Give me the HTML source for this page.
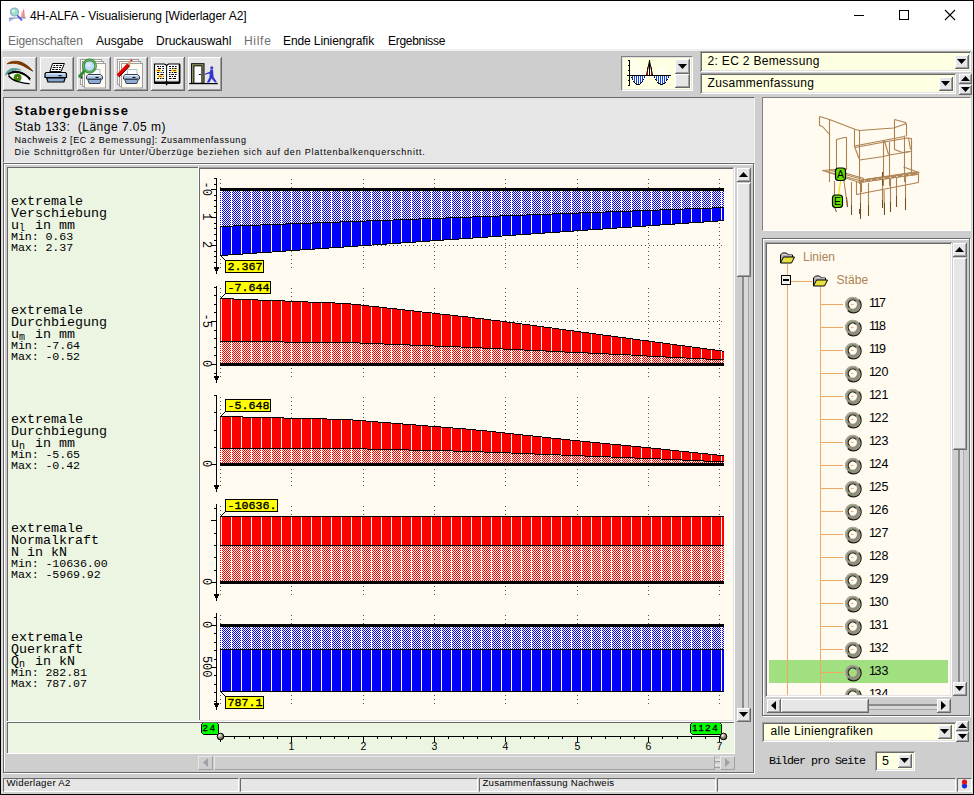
<!DOCTYPE html>
<html lang="de"><head><meta charset="utf-8"><title>4H-ALFA - Visualisierung [Widerlager A2]</title>
<style>
html,body{margin:0;padding:0;}
body{width:974px;height:795px;overflow:hidden;background:#fff;position:relative;font-family:"Liberation Sans",sans-serif;font-size:12px;color:#000;}
body div, body svg{position:absolute;box-sizing:content-box;}
.ui{font-family:"Liberation Sans",sans-serif;font-size:12px;line-height:16px;}
.mono{font-family:"Liberation Mono",monospace;}
svg text{font-family:"Liberation Mono",monospace;}
svg text.sans{font-family:"Liberation Sans",sans-serif;}
</style></head><body>
<div style="left:0px;top:0px;width:974px;height:795px;background:#000;"></div>
<div style="left:1px;top:1px;width:972px;height:793px;background:#fff;"></div>
<svg style="left:9px;top:6.5px" width="17" height="16" viewBox="0 0 17 16">
<polygon points="0,11 0,15 6,11" fill="#9ab4e8"/>
<polygon points="11,11 15,1 16,11" fill="#e88a8a"/>
<line x1="13" y1="4" x2="13" y2="11" stroke="#f4c0c0" stroke-width="1"/>
<line x1="0" y1="11" x2="17" y2="11" stroke="#7c8aa8" stroke-width="1"/>
<line x1="8" y1="8" x2="13" y2="13.5" stroke="#5050e0" stroke-width="1.8"/>
<circle cx="5.5" cy="5" r="4" fill="#9fe0c0" stroke="#88a8d8" stroke-width="1.2"/>
<circle cx="4.5" cy="4" r="1.6" fill="#d8f8e8"/>
</svg>
<div class="ui" style="left:30px;top:8px;white-space:pre;letter-spacing:-0.05px;">4H-ALFA - Visualisierung [Widerlager A2]</div>
<svg style="left:840px;top:1px" width="132" height="30" viewBox="840 1 132 30" shape-rendering="crispEdges"><rect x="854" y="15" width="10" height="1" fill="#000"/><rect x="899.5" y="10.5" width="9" height="9" fill="none" stroke="#000" stroke-width="1"/><g shape-rendering="auto" stroke="#000" stroke-width="1.1"><line x1="945" y1="10" x2="955" y2="20"/><line x1="955" y1="10" x2="945" y2="20"/></g></svg>
<div class="ui" style="left:8px;top:33px;white-space:pre;color:#6d6d6d;letter-spacing:-0.1px;">Eigenschaften</div>
<div class="ui" style="left:96px;top:33px;white-space:pre;color:#000;letter-spacing:0px;">Ausgabe</div>
<div class="ui" style="left:156px;top:33px;white-space:pre;color:#000;letter-spacing:0px;">Druckauswahl</div>
<div class="ui" style="left:244px;top:33px;white-space:pre;color:#6d6d6d;letter-spacing:0.7px;">Hilfe</div>
<div class="ui" style="left:283px;top:33px;white-space:pre;color:#000;letter-spacing:-0.1px;">Ende Liniengrafik</div>
<div class="ui" style="left:388px;top:33px;white-space:pre;color:#000;letter-spacing:-0.3px;">Ergebnisse</div>
<div style="left:1px;top:49px;width:972px;height:2px;background:#f0f0f0;"></div>
<div style="left:1px;top:51px;width:972px;height:743px;background:#cecece;"></div>
<div style="left:3px;top:57px;width:34px;height:34px;background:#e6e6e6;box-shadow:inset -1px -1px 0 #696969, inset 1px 1px 0 #fff, inset -2px -2px 0 #a0a0a0;"></div>
<div style="left:40px;top:57px;width:34px;height:34px;background:#e6e6e6;box-shadow:inset -1px -1px 0 #696969, inset 1px 1px 0 #fff, inset -2px -2px 0 #a0a0a0;"></div>
<div style="left:77px;top:57px;width:34px;height:34px;background:#e6e6e6;box-shadow:inset -1px -1px 0 #696969, inset 1px 1px 0 #fff, inset -2px -2px 0 #a0a0a0;"></div>
<div style="left:114px;top:57px;width:34px;height:34px;background:#e6e6e6;box-shadow:inset -1px -1px 0 #696969, inset 1px 1px 0 #fff, inset -2px -2px 0 #a0a0a0;"></div>
<div style="left:151px;top:57px;width:34px;height:34px;background:#e6e6e6;box-shadow:inset -1px -1px 0 #696969, inset 1px 1px 0 #fff, inset -2px -2px 0 #a0a0a0;"></div>
<div style="left:188px;top:57px;width:34px;height:34px;background:#e6e6e6;box-shadow:inset -1px -1px 0 #696969, inset 1px 1px 0 #fff, inset -2px -2px 0 #a0a0a0;"></div>
<div style="left:621px;top:56px;width:70px;height:33px;background:#ffffe1;border-style:solid;border-width:1px;border-color:#808080 #ffffff #ffffff #808080;"></div>
<div style="left:622px;top:57px;width:68px;height:31px;border:1px solid #e4e4e4;"></div>
<div style="left:675px;top:59px;width:15px;height:15px;background:#e6e6e6;box-shadow:inset -1px -1px 0 #696969, inset 1px 1px 0 #fff, inset -2px -2px 0 #a0a0a0;"></div>
<svg style="left:678.0px;top:64.0px" width="9" height="5" viewBox="0 0 9 5"><polygon points="0,0 9,0 4.5,5" fill="#000"/></svg>
<div style="left:675px;top:74px;width:15px;height:14px;background:#e6e6e6;box-shadow:inset -1px -1px 0 #696969, inset 1px 1px 0 #fff, inset -2px -2px 0 #a0a0a0;"></div>
<svg style="left:624px;top:59px" width="50" height="30" viewBox="0 0 50 30" shape-rendering="crispEdges"><rect x="8" y="1" width="1" height="15" fill="#fff"/><rect x="10" y="3" width="1" height="13" fill="#fff"/><rect x="12" y="5" width="1" height="11" fill="#fff"/><rect x="14" y="7" width="1" height="9" fill="#fff"/><rect x="16" y="9" width="1" height="7" fill="#fff"/><rect x="18" y="11" width="1" height="5" fill="#fff"/><rect x="20" y="13" width="1" height="3" fill="#fff"/><rect x="30" y="14" width="1" height="2" fill="#fff"/><rect x="32" y="12" width="1" height="4" fill="#fff"/><rect x="34" y="10" width="1" height="6" fill="#fff"/><rect x="36" y="8" width="1" height="8" fill="#fff"/><rect x="38" y="8" width="1" height="8" fill="#fff"/><rect x="40" y="10" width="1" height="6" fill="#fff"/><rect x="42" y="12" width="1" height="4" fill="#fff"/><rect x="44" y="14" width="1" height="2" fill="#fff"/><rect x="6" y="16" width="1" height="1" fill="#000"/><rect x="7" y="18" width="1" height="1" fill="#000"/><rect x="8" y="17" width="1" height="4" fill="#1040ff"/><rect x="8" y="20" width="1" height="1" fill="#000"/><rect x="9" y="22" width="1" height="1" fill="#000"/><rect x="10" y="17" width="1" height="7" fill="#1040ff"/><rect x="10" y="23" width="1" height="1" fill="#000"/><rect x="11" y="24" width="1" height="1" fill="#000"/><rect x="12" y="17" width="1" height="9" fill="#1040ff"/><rect x="12" y="25" width="1" height="1" fill="#000"/><rect x="13" y="25" width="1" height="1" fill="#000"/><rect x="14" y="17" width="1" height="9" fill="#1040ff"/><rect x="14" y="25" width="1" height="1" fill="#000"/><rect x="15" y="25" width="1" height="1" fill="#000"/><rect x="16" y="17" width="1" height="8" fill="#1040ff"/><rect x="16" y="24" width="1" height="1" fill="#000"/><rect x="17" y="23" width="1" height="1" fill="#000"/><rect x="18" y="17" width="1" height="6" fill="#1040ff"/><rect x="18" y="22" width="1" height="1" fill="#000"/><rect x="19" y="20" width="1" height="1" fill="#000"/><rect x="20" y="17" width="1" height="2" fill="#1040ff"/><rect x="20" y="18" width="1" height="1" fill="#000"/><rect x="21" y="16" width="1" height="1" fill="#000"/><rect x="29" y="16" width="1" height="1" fill="#000"/><rect x="30" y="17" width="1" height="2" fill="#1040ff"/><rect x="30" y="18" width="1" height="1" fill="#000"/><rect x="31" y="20" width="1" height="1" fill="#000"/><rect x="32" y="17" width="1" height="5" fill="#1040ff"/><rect x="32" y="21" width="1" height="1" fill="#000"/><rect x="33" y="23" width="1" height="1" fill="#000"/><rect x="34" y="17" width="1" height="8" fill="#1040ff"/><rect x="34" y="24" width="1" height="1" fill="#000"/><rect x="35" y="24" width="1" height="1" fill="#000"/><rect x="36" y="17" width="1" height="9" fill="#1040ff"/><rect x="36" y="25" width="1" height="1" fill="#000"/><rect x="37" y="25" width="1" height="1" fill="#000"/><rect x="38" y="17" width="1" height="9" fill="#1040ff"/><rect x="38" y="25" width="1" height="1" fill="#000"/><rect x="39" y="24" width="1" height="1" fill="#000"/><rect x="40" y="17" width="1" height="8" fill="#1040ff"/><rect x="40" y="24" width="1" height="1" fill="#000"/><rect x="41" y="23" width="1" height="1" fill="#000"/><rect x="42" y="17" width="1" height="5" fill="#1040ff"/><rect x="42" y="21" width="1" height="1" fill="#000"/><rect x="43" y="20" width="1" height="1" fill="#000"/><rect x="44" y="17" width="1" height="2" fill="#1040ff"/><rect x="44" y="18" width="1" height="1" fill="#000"/><rect x="45" y="16" width="1" height="1" fill="#000"/><rect x="22" y="13" width="1" height="3" fill="#ffffe1"/><rect x="23" y="8" width="1" height="8" fill="#ff0000"/><rect x="24" y="3" width="1" height="13" fill="#ffffe1"/><rect x="25" y="1" width="1" height="15" fill="#ff0000"/><rect x="26" y="3" width="1" height="13" fill="#ffffe1"/><rect x="27" y="8" width="1" height="8" fill="#ff0000"/><rect x="28" y="13" width="1" height="3" fill="#ffffe1"/><rect x="25" y="1" width="1" height="15" fill="#000"/><polyline points="22.5,16 25.5,2 28.5,16" fill="none" stroke="#000" stroke-width="1" shape-rendering="auto"/><rect x="3" y="16" width="44" height="1" fill="#000"/><rect x="5" y="1" width="1" height="26" fill="#000"/><rect x="4" y="1" width="1" height="1" fill="#000"/><rect x="4" y="6" width="1" height="1" fill="#000"/><rect x="4" y="11" width="1" height="1" fill="#000"/><rect x="4" y="21" width="1" height="1" fill="#000"/><rect x="4" y="26" width="1" height="1" fill="#000"/></svg>
<div style="left:700px;top:51px;width:271px;height:21px;background:#ffffe1;box-shadow:inset 1px 1px 0 #a0a0a0, inset -1px -1px 0 #fff, inset 2px 2px 0 #696969, inset -2px -2px 0 #e3e3e3;"></div>
<div style="left:955px;top:55px;width:14px;height:14px;background:#e6e6e6;box-shadow:inset -1px -1px 0 #696969, inset 1px 1px 0 #fff, inset -2px -2px 0 #a0a0a0;"></div>
<svg style="left:957.0px;top:59.0px" width="9" height="5" viewBox="0 0 9 5"><polygon points="0,0 9,0 4.5,5" fill="#000"/></svg>
<div style="left:707.5px;top:53px;white-space:pre;font-size:12px;letter-spacing:0.32px;line-height:16px;">2: EC 2 Bemessung</div>
<div style="left:700px;top:73px;width:256px;height:21px;background:#ffffe1;box-shadow:inset 1px 1px 0 #a0a0a0, inset -1px -1px 0 #fff, inset 2px 2px 0 #696969, inset -2px -2px 0 #e3e3e3;"></div>
<div style="left:939px;top:77px;width:14px;height:14px;background:#e6e6e6;box-shadow:inset -1px -1px 0 #696969, inset 1px 1px 0 #fff, inset -2px -2px 0 #a0a0a0;"></div>
<svg style="left:941.0px;top:81.0px" width="9" height="5" viewBox="0 0 9 5"><polygon points="0,0 9,0 4.5,5" fill="#000"/></svg>
<div style="left:707.5px;top:74.5px;white-space:pre;font-size:12px;letter-spacing:0.32px;line-height:16px;">Zusammenfassung</div>
<div style="left:959px;top:74px;width:13px;height:10px;background:#e6e6e6;box-shadow:inset -1px -1px 0 #696969, inset 1px 1px 0 #fff, inset -2px -2px 0 #a0a0a0;"></div>
<svg style="left:961.0px;top:76.0px" width="9" height="5" viewBox="0 0 9 5"><polygon points="0,5 4.5,0 9,5" fill="#000"/></svg>
<div style="left:959px;top:85px;width:13px;height:10px;background:#e6e6e6;box-shadow:inset -1px -1px 0 #696969, inset 1px 1px 0 #fff, inset -2px -2px 0 #a0a0a0;"></div>
<svg style="left:961.0px;top:87.0px" width="9" height="5" viewBox="0 0 9 5"><polygon points="0,0 9,0 4.5,5" fill="#000"/></svg>
<div style="left:3px;top:97px;width:750px;height:64px;background:#e6e6e6;border-style:solid;border-width:1px;border-color:#696969 #f4f4f4 #f4f4f4 #696969;"></div>
<div style="left:14.5px;top:103px;white-space:pre;font-weight:bold;font-size:13px;letter-spacing:1.28px;line-height:16px;">Stabergebnisse</div>
<div style="left:14.5px;top:119px;white-space:pre;font-size:12px;letter-spacing:0.48px;line-height:16px;">Stab 133:  (Länge 7.05 m)</div>
<div style="left:14.5px;top:135px;white-space:pre;font-size:9px;letter-spacing:0.6px;line-height:11px;">Nachweis 2 [EC 2 Bemessung]: Zusammenfassung</div>
<div style="left:14.5px;top:146.6px;white-space:pre;font-size:9px;letter-spacing:0.79px;line-height:11px;">Die Schnittgrößen für Unter/Überzüge beziehen sich auf den Plattenbalkenquerschnitt.</div>
<div style="left:1px;top:51px;width:2px;height:743px;background:#dcdcdc;"></div>
<div style="left:972px;top:51px;width:1px;height:743px;background:#e0e0e0;"></div>
<div style="left:4px;top:164px;width:749px;height:608px;border:1px solid #fff;"></div>
<div style="left:3px;top:163px;width:749px;height:608px;background:#cecece;border:1px solid #696969;"></div>
<div style="left:4px;top:164px;width:1px;height:608px;background:#fff;"></div>
<div style="left:4px;top:164px;width:749px;height:1px;background:#fff;"></div>
<div style="left:7px;top:167px;width:192px;height:555px;background:#fff;"></div>
<div style="left:7px;top:167px;width:191px;height:554px;background:#696969;"></div>
<div style="left:8px;top:168px;width:190px;height:553px;background:#ecf5e2;"></div>
<div style="left:199px;top:167px;width:536px;height:555px;background:#fff;"></div>
<div style="left:199px;top:167px;width:535px;height:554px;background:#e3e3e3;"></div>
<div style="left:199px;top:167px;width:534px;height:553px;background:#696969;"></div>
<div style="left:199px;top:167px;width:535px;height:1px;background:#a0a0a0;"></div>
<div style="left:200px;top:169px;width:533px;height:551px;background:#fffbf0;"></div>
<div style="left:7px;top:722px;width:728px;height:32px;background:#fff;"></div>
<div style="left:7px;top:722px;width:727px;height:31px;background:#696969;"></div>
<div style="left:8px;top:723px;width:726px;height:30px;background:#ecf5e2;"></div>
<svg style="left:200px;top:169px" width="533" height="551" viewBox="200 169 533 551" shape-rendering="crispEdges"><defs><pattern id="pb" width="2" height="2" patternUnits="userSpaceOnUse"><rect width="2" height="2" fill="#fffbf0"/><rect x="0" y="0" width="1" height="1" fill="#0000ff"/><rect x="1" y="1" width="1" height="1" fill="#0000ff"/></pattern><pattern id="pr" width="2" height="2" patternUnits="userSpaceOnUse"><rect width="2" height="2" fill="#fffbf0"/><rect x="0" y="0" width="1" height="1" fill="#ff0000"/><rect x="1" y="1" width="1" height="1" fill="#ff0000"/></pattern></defs><line x1="220.5" y1="179" x2="220.5" y2="269" stroke="#505050" stroke-width="1" stroke-dasharray="1 3"/><line x1="291.5" y1="179" x2="291.5" y2="269" stroke="#505050" stroke-width="1" stroke-dasharray="1 3"/><line x1="363.5" y1="179" x2="363.5" y2="269" stroke="#505050" stroke-width="1" stroke-dasharray="1 3"/><line x1="434.5" y1="179" x2="434.5" y2="269" stroke="#505050" stroke-width="1" stroke-dasharray="1 3"/><line x1="505.5" y1="179" x2="505.5" y2="269" stroke="#505050" stroke-width="1" stroke-dasharray="1 3"/><line x1="577.5" y1="179" x2="577.5" y2="269" stroke="#505050" stroke-width="1" stroke-dasharray="1 3"/><line x1="648.5" y1="179" x2="648.5" y2="269" stroke="#505050" stroke-width="1" stroke-dasharray="1 3"/><line x1="719.5" y1="179" x2="719.5" y2="269" stroke="#505050" stroke-width="1" stroke-dasharray="1 3"/><line x1="221" y1="217.5" x2="724" y2="217.5" stroke="#505050" stroke-width="1" stroke-dasharray="1 3"/><line x1="221" y1="245.5" x2="724" y2="245.5" stroke="#505050" stroke-width="1" stroke-dasharray="1 3"/><rect x="220" y="189" width="8" height="37" fill="url(#pb)"/><rect x="220" y="226" width="8" height="29" fill="#0000ff"/><rect x="228" y="189" width="5" height="37" fill="url(#pb)"/><rect x="228" y="226" width="5" height="28" fill="#0000ff"/><rect x="233" y="189" width="10" height="36" fill="url(#pb)"/><rect x="233" y="225" width="10" height="29" fill="#0000ff"/><rect x="243" y="189" width="14" height="36" fill="url(#pb)"/><rect x="243" y="225" width="14" height="28" fill="#0000ff"/><rect x="257" y="189" width="3" height="36" fill="url(#pb)"/><rect x="257" y="225" width="3" height="27" fill="#0000ff"/><rect x="260" y="189" width="12" height="35" fill="url(#pb)"/><rect x="260" y="224" width="12" height="28" fill="#0000ff"/><rect x="272" y="189" width="14" height="35" fill="url(#pb)"/><rect x="272" y="224" width="14" height="27" fill="#0000ff"/><rect x="286" y="189" width="14" height="34" fill="url(#pb)"/><rect x="286" y="223" width="14" height="27" fill="#0000ff"/><rect x="300" y="189" width="13" height="34" fill="url(#pb)"/><rect x="300" y="223" width="13" height="26" fill="#0000ff"/><rect x="313" y="189" width="2" height="33" fill="url(#pb)"/><rect x="313" y="222" width="2" height="27" fill="#0000ff"/><rect x="315" y="189" width="14" height="33" fill="url(#pb)"/><rect x="315" y="222" width="14" height="26" fill="#0000ff"/><rect x="329" y="189" width="11" height="33" fill="url(#pb)"/><rect x="329" y="222" width="11" height="25" fill="#0000ff"/><rect x="340" y="189" width="4" height="32" fill="url(#pb)"/><rect x="340" y="221" width="4" height="26" fill="#0000ff"/><rect x="344" y="189" width="14" height="32" fill="url(#pb)"/><rect x="344" y="221" width="14" height="25" fill="#0000ff"/><rect x="358" y="189" width="8" height="32" fill="url(#pb)"/><rect x="358" y="221" width="8" height="24" fill="#0000ff"/><rect x="366" y="189" width="6" height="31" fill="url(#pb)"/><rect x="366" y="220" width="6" height="25" fill="#0000ff"/><rect x="372" y="189" width="15" height="31" fill="url(#pb)"/><rect x="372" y="220" width="15" height="24" fill="#0000ff"/><rect x="387" y="189" width="6" height="31" fill="url(#pb)"/><rect x="387" y="220" width="6" height="23" fill="#0000ff"/><rect x="393" y="189" width="8" height="30" fill="url(#pb)"/><rect x="393" y="219" width="8" height="24" fill="#0000ff"/><rect x="401" y="189" width="15" height="30" fill="url(#pb)"/><rect x="401" y="219" width="15" height="23" fill="#0000ff"/><rect x="416" y="189" width="3" height="30" fill="url(#pb)"/><rect x="416" y="219" width="3" height="22" fill="#0000ff"/><rect x="419" y="189" width="11" height="29" fill="url(#pb)"/><rect x="419" y="218" width="11" height="23" fill="#0000ff"/><rect x="430" y="189" width="14" height="29" fill="url(#pb)"/><rect x="430" y="218" width="14" height="22" fill="#0000ff"/><rect x="444" y="189" width="2" height="29" fill="url(#pb)"/><rect x="444" y="218" width="2" height="21" fill="#0000ff"/><rect x="446" y="189" width="13" height="28" fill="url(#pb)"/><rect x="446" y="217" width="13" height="22" fill="#0000ff"/><rect x="459" y="189" width="13" height="28" fill="url(#pb)"/><rect x="459" y="217" width="13" height="21" fill="#0000ff"/><rect x="472" y="189" width="1" height="27" fill="url(#pb)"/><rect x="472" y="216" width="1" height="22" fill="#0000ff"/><rect x="473" y="189" width="15" height="27" fill="url(#pb)"/><rect x="473" y="216" width="15" height="21" fill="#0000ff"/><rect x="488" y="189" width="11" height="27" fill="url(#pb)"/><rect x="488" y="216" width="11" height="20" fill="#0000ff"/><rect x="499" y="189" width="3" height="26" fill="url(#pb)"/><rect x="499" y="215" width="3" height="21" fill="#0000ff"/><rect x="502" y="189" width="14" height="26" fill="url(#pb)"/><rect x="502" y="215" width="14" height="20" fill="#0000ff"/><rect x="516" y="189" width="10" height="26" fill="url(#pb)"/><rect x="516" y="215" width="10" height="19" fill="#0000ff"/><rect x="526" y="189" width="5" height="25" fill="url(#pb)"/><rect x="526" y="214" width="5" height="20" fill="#0000ff"/><rect x="531" y="189" width="14" height="25" fill="url(#pb)"/><rect x="531" y="214" width="14" height="19" fill="#0000ff"/><rect x="545" y="189" width="7" height="25" fill="url(#pb)"/><rect x="545" y="214" width="7" height="18" fill="#0000ff"/><rect x="552" y="189" width="8" height="24" fill="url(#pb)"/><rect x="552" y="213" width="8" height="19" fill="#0000ff"/><rect x="560" y="189" width="14" height="24" fill="url(#pb)"/><rect x="560" y="213" width="14" height="18" fill="#0000ff"/><rect x="574" y="189" width="5" height="24" fill="url(#pb)"/><rect x="574" y="213" width="5" height="17" fill="#0000ff"/><rect x="579" y="189" width="9" height="23" fill="url(#pb)"/><rect x="579" y="212" width="9" height="18" fill="#0000ff"/><rect x="588" y="189" width="15" height="23" fill="url(#pb)"/><rect x="588" y="212" width="15" height="17" fill="#0000ff"/><rect x="603" y="189" width="2" height="23" fill="url(#pb)"/><rect x="603" y="212" width="2" height="16" fill="#0000ff"/><rect x="605" y="189" width="12" height="22" fill="url(#pb)"/><rect x="605" y="211" width="12" height="17" fill="#0000ff"/><rect x="617" y="189" width="15" height="22" fill="url(#pb)"/><rect x="617" y="211" width="15" height="16" fill="#0000ff"/><rect x="632" y="189" width="14" height="21" fill="url(#pb)"/><rect x="632" y="210" width="14" height="16" fill="#0000ff"/><rect x="646" y="189" width="13" height="21" fill="url(#pb)"/><rect x="646" y="210" width="13" height="15" fill="#0000ff"/><rect x="659" y="189" width="1" height="20" fill="url(#pb)"/><rect x="659" y="209" width="1" height="16" fill="#0000ff"/><rect x="660" y="189" width="15" height="20" fill="url(#pb)"/><rect x="660" y="209" width="15" height="15" fill="#0000ff"/><rect x="675" y="189" width="10" height="20" fill="url(#pb)"/><rect x="675" y="209" width="10" height="14" fill="#0000ff"/><rect x="685" y="189" width="4" height="19" fill="url(#pb)"/><rect x="685" y="208" width="4" height="15" fill="#0000ff"/><rect x="689" y="189" width="15" height="19" fill="url(#pb)"/><rect x="689" y="208" width="15" height="14" fill="#0000ff"/><rect x="704" y="189" width="8" height="19" fill="url(#pb)"/><rect x="704" y="208" width="8" height="13" fill="#0000ff"/><rect x="712" y="189" width="6" height="18" fill="url(#pb)"/><rect x="712" y="207" width="6" height="14" fill="#0000ff"/><rect x="718" y="189" width="6" height="18" fill="url(#pb)"/><rect x="718" y="207" width="6" height="13" fill="#0000ff"/><g fill="#fffbf0"><rect x="221" y="189" width="1" height="66"/><rect x="231" y="189" width="1" height="65"/><rect x="241" y="189" width="1" height="65"/><rect x="251" y="189" width="1" height="64"/><rect x="261" y="189" width="1" height="63"/><rect x="271" y="189" width="1" height="63"/><rect x="281" y="189" width="1" height="62"/><rect x="291" y="189" width="1" height="61"/><rect x="301" y="189" width="1" height="60"/><rect x="311" y="189" width="1" height="60"/><rect x="321" y="189" width="1" height="59"/><rect x="331" y="189" width="1" height="58"/><rect x="341" y="189" width="1" height="58"/><rect x="351" y="189" width="1" height="57"/><rect x="361" y="189" width="1" height="56"/><rect x="371" y="189" width="1" height="56"/><rect x="381" y="189" width="1" height="55"/><rect x="391" y="189" width="1" height="54"/><rect x="401" y="189" width="1" height="53"/><rect x="411" y="189" width="1" height="53"/><rect x="421" y="189" width="1" height="52"/><rect x="431" y="189" width="1" height="51"/><rect x="441" y="189" width="1" height="51"/><rect x="451" y="189" width="1" height="50"/><rect x="461" y="189" width="1" height="49"/><rect x="471" y="189" width="1" height="49"/><rect x="481" y="189" width="1" height="48"/><rect x="491" y="189" width="1" height="47"/><rect x="501" y="189" width="1" height="47"/><rect x="511" y="189" width="1" height="46"/><rect x="521" y="189" width="1" height="45"/><rect x="531" y="189" width="1" height="44"/><rect x="541" y="189" width="1" height="44"/><rect x="551" y="189" width="1" height="43"/><rect x="561" y="189" width="1" height="42"/><rect x="571" y="189" width="1" height="42"/><rect x="581" y="189" width="1" height="41"/><rect x="591" y="189" width="1" height="40"/><rect x="601" y="189" width="1" height="40"/><rect x="611" y="189" width="1" height="39"/><rect x="621" y="189" width="1" height="38"/><rect x="631" y="189" width="1" height="38"/><rect x="641" y="189" width="1" height="37"/><rect x="651" y="189" width="1" height="36"/><rect x="661" y="189" width="1" height="35"/><rect x="671" y="189" width="1" height="35"/><rect x="681" y="189" width="1" height="34"/><rect x="691" y="189" width="1" height="33"/><rect x="701" y="189" width="1" height="33"/><rect x="711" y="189" width="1" height="32"/><rect x="721" y="189" width="1" height="31"/></g><g fill="#000"><rect x="220" y="226" width="8" height="1"/><rect x="220" y="255" width="8" height="1"/><rect x="228" y="226" width="5" height="1"/><rect x="228" y="254" width="5" height="1"/><rect x="233" y="225" width="10" height="1"/><rect x="233" y="254" width="10" height="1"/><rect x="243" y="225" width="14" height="1"/><rect x="243" y="253" width="14" height="1"/><rect x="257" y="225" width="3" height="1"/><rect x="257" y="252" width="3" height="1"/><rect x="260" y="224" width="12" height="1"/><rect x="260" y="252" width="12" height="1"/><rect x="272" y="224" width="14" height="1"/><rect x="272" y="251" width="14" height="1"/><rect x="286" y="223" width="14" height="1"/><rect x="286" y="250" width="14" height="1"/><rect x="300" y="223" width="13" height="1"/><rect x="300" y="249" width="13" height="1"/><rect x="313" y="222" width="2" height="1"/><rect x="313" y="249" width="2" height="1"/><rect x="315" y="222" width="14" height="1"/><rect x="315" y="248" width="14" height="1"/><rect x="329" y="222" width="11" height="1"/><rect x="329" y="247" width="11" height="1"/><rect x="340" y="221" width="4" height="1"/><rect x="340" y="247" width="4" height="1"/><rect x="344" y="221" width="14" height="1"/><rect x="344" y="246" width="14" height="1"/><rect x="358" y="221" width="8" height="1"/><rect x="358" y="245" width="8" height="1"/><rect x="366" y="220" width="6" height="1"/><rect x="366" y="245" width="6" height="1"/><rect x="372" y="220" width="15" height="1"/><rect x="372" y="244" width="15" height="1"/><rect x="387" y="220" width="6" height="1"/><rect x="387" y="243" width="6" height="1"/><rect x="393" y="219" width="8" height="1"/><rect x="393" y="243" width="8" height="1"/><rect x="401" y="219" width="15" height="1"/><rect x="401" y="242" width="15" height="1"/><rect x="416" y="219" width="3" height="1"/><rect x="416" y="241" width="3" height="1"/><rect x="419" y="218" width="11" height="1"/><rect x="419" y="241" width="11" height="1"/><rect x="430" y="218" width="14" height="1"/><rect x="430" y="240" width="14" height="1"/><rect x="444" y="218" width="2" height="1"/><rect x="444" y="239" width="2" height="1"/><rect x="446" y="217" width="13" height="1"/><rect x="446" y="239" width="13" height="1"/><rect x="459" y="217" width="13" height="1"/><rect x="459" y="238" width="13" height="1"/><rect x="472" y="216" width="1" height="1"/><rect x="472" y="238" width="1" height="1"/><rect x="473" y="216" width="15" height="1"/><rect x="473" y="237" width="15" height="1"/><rect x="488" y="216" width="11" height="1"/><rect x="488" y="236" width="11" height="1"/><rect x="499" y="215" width="3" height="1"/><rect x="499" y="236" width="3" height="1"/><rect x="502" y="215" width="14" height="1"/><rect x="502" y="235" width="14" height="1"/><rect x="516" y="215" width="10" height="1"/><rect x="516" y="234" width="10" height="1"/><rect x="526" y="214" width="5" height="1"/><rect x="526" y="234" width="5" height="1"/><rect x="531" y="214" width="14" height="1"/><rect x="531" y="233" width="14" height="1"/><rect x="545" y="214" width="7" height="1"/><rect x="545" y="232" width="7" height="1"/><rect x="552" y="213" width="8" height="1"/><rect x="552" y="232" width="8" height="1"/><rect x="560" y="213" width="14" height="1"/><rect x="560" y="231" width="14" height="1"/><rect x="574" y="213" width="5" height="1"/><rect x="574" y="230" width="5" height="1"/><rect x="579" y="212" width="9" height="1"/><rect x="579" y="230" width="9" height="1"/><rect x="588" y="212" width="15" height="1"/><rect x="588" y="229" width="15" height="1"/><rect x="603" y="212" width="2" height="1"/><rect x="603" y="228" width="2" height="1"/><rect x="605" y="211" width="12" height="1"/><rect x="605" y="228" width="12" height="1"/><rect x="617" y="211" width="15" height="1"/><rect x="617" y="227" width="15" height="1"/><rect x="632" y="210" width="14" height="1"/><rect x="632" y="226" width="14" height="1"/><rect x="646" y="210" width="13" height="1"/><rect x="646" y="225" width="13" height="1"/><rect x="659" y="209" width="1" height="1"/><rect x="659" y="225" width="1" height="1"/><rect x="660" y="209" width="15" height="1"/><rect x="660" y="224" width="15" height="1"/><rect x="675" y="209" width="10" height="1"/><rect x="675" y="223" width="10" height="1"/><rect x="685" y="208" width="4" height="1"/><rect x="685" y="223" width="4" height="1"/><rect x="689" y="208" width="15" height="1"/><rect x="689" y="222" width="15" height="1"/><rect x="704" y="208" width="8" height="1"/><rect x="704" y="221" width="8" height="1"/><rect x="712" y="207" width="6" height="1"/><rect x="712" y="221" width="6" height="1"/><rect x="718" y="207" width="6" height="1"/><rect x="718" y="220" width="6" height="1"/><rect x="220" y="188" width="504" height="3"/><rect x="216" y="178" width="1" height="94"/><rect x="214" y="178" width="2" height="1"/><rect x="214" y="184" width="2" height="1"/><rect x="214" y="189" width="2" height="1"/><rect x="214" y="195" width="2" height="1"/><rect x="214" y="200" width="2" height="1"/><rect x="214" y="206" width="2" height="1"/><rect x="214" y="212" width="2" height="1"/><rect x="214" y="217" width="2" height="1"/><rect x="214" y="223" width="2" height="1"/><rect x="214" y="228" width="2" height="1"/><rect x="214" y="234" width="2" height="1"/><rect x="214" y="240" width="2" height="1"/><rect x="214" y="245" width="2" height="1"/><rect x="214" y="251" width="2" height="1"/><rect x="214" y="256" width="2" height="1"/><rect x="214" y="262" width="2" height="1"/><rect x="211" y="189" width="5" height="1"/><rect x="211" y="217" width="5" height="1"/><rect x="211" y="245" width="5" height="1"/><rect x="214" y="267" width="5" height="2"/><rect x="215" y="269" width="3" height="2"/><rect x="216" y="271" width="1" height="3"/></g><text transform="translate(203,188.7) rotate(90)" text-anchor="middle" font-size="12" shape-rendering="auto">-0</text><text transform="translate(203,216.7) rotate(90)" text-anchor="middle" font-size="12" shape-rendering="auto">1</text><text transform="translate(203,244.7) rotate(90)" text-anchor="middle" font-size="12" shape-rendering="auto">2</text><line x1="220.5" y1="255.5" x2="225.5" y2="260.5" stroke="#000" stroke-width="1" shape-rendering="auto"/><rect x="225.5" y="260.5" width="38" height="12" fill="#ffff00" stroke="#000" stroke-width="1"/><text x="245.0" y="269.6" text-anchor="middle" font-size="11.67" stroke="#000" stroke-width="0.35" shape-rendering="auto">2.367</text><line x1="220.5" y1="288" x2="220.5" y2="378" stroke="#505050" stroke-width="1" stroke-dasharray="1 3"/><line x1="291.5" y1="288" x2="291.5" y2="378" stroke="#505050" stroke-width="1" stroke-dasharray="1 3"/><line x1="363.5" y1="288" x2="363.5" y2="378" stroke="#505050" stroke-width="1" stroke-dasharray="1 3"/><line x1="434.5" y1="288" x2="434.5" y2="378" stroke="#505050" stroke-width="1" stroke-dasharray="1 3"/><line x1="505.5" y1="288" x2="505.5" y2="378" stroke="#505050" stroke-width="1" stroke-dasharray="1 3"/><line x1="577.5" y1="288" x2="577.5" y2="378" stroke="#505050" stroke-width="1" stroke-dasharray="1 3"/><line x1="648.5" y1="288" x2="648.5" y2="378" stroke="#505050" stroke-width="1" stroke-dasharray="1 3"/><line x1="719.5" y1="288" x2="719.5" y2="378" stroke="#505050" stroke-width="1" stroke-dasharray="1 3"/><line x1="221" y1="321.5" x2="724" y2="321.5" stroke="#505050" stroke-width="1" stroke-dasharray="1 3"/><rect x="220" y="341" width="14" height="23" fill="url(#pr)"/><rect x="220" y="298" width="14" height="43" fill="#ff0000"/><rect x="234" y="341" width="24" height="23" fill="url(#pr)"/><rect x="234" y="299" width="24" height="42" fill="#ff0000"/><rect x="258" y="341" width="26" height="23" fill="url(#pr)"/><rect x="258" y="300" width="26" height="41" fill="#ff0000"/><rect x="284" y="342" width="1" height="22" fill="url(#pr)"/><rect x="284" y="300" width="1" height="42" fill="#ff0000"/><rect x="285" y="342" width="23" height="22" fill="url(#pr)"/><rect x="285" y="301" width="23" height="41" fill="#ff0000"/><rect x="308" y="342" width="27" height="22" fill="url(#pr)"/><rect x="308" y="302" width="27" height="40" fill="#ff0000"/><rect x="335" y="342" width="16" height="22" fill="url(#pr)"/><rect x="335" y="303" width="16" height="39" fill="#ff0000"/><rect x="351" y="342" width="9" height="22" fill="url(#pr)"/><rect x="351" y="304" width="9" height="38" fill="#ff0000"/><rect x="360" y="343" width="1" height="21" fill="url(#pr)"/><rect x="360" y="304" width="1" height="39" fill="#ff0000"/><rect x="361" y="343" width="8" height="21" fill="url(#pr)"/><rect x="361" y="305" width="8" height="38" fill="#ff0000"/><rect x="369" y="343" width="10" height="21" fill="url(#pr)"/><rect x="369" y="306" width="10" height="37" fill="#ff0000"/><rect x="379" y="343" width="5" height="21" fill="url(#pr)"/><rect x="379" y="307" width="5" height="36" fill="#ff0000"/><rect x="384" y="344" width="3" height="20" fill="url(#pr)"/><rect x="384" y="307" width="3" height="37" fill="#ff0000"/><rect x="387" y="344" width="10" height="20" fill="url(#pr)"/><rect x="387" y="308" width="10" height="36" fill="#ff0000"/><rect x="397" y="344" width="8" height="20" fill="url(#pr)"/><rect x="397" y="309" width="8" height="35" fill="#ff0000"/><rect x="405" y="344" width="5" height="20" fill="url(#pr)"/><rect x="405" y="310" width="5" height="34" fill="#ff0000"/><rect x="410" y="345" width="4" height="19" fill="url(#pr)"/><rect x="410" y="310" width="4" height="35" fill="#ff0000"/><rect x="414" y="345" width="8" height="19" fill="url(#pr)"/><rect x="414" y="311" width="8" height="34" fill="#ff0000"/><rect x="422" y="345" width="10" height="19" fill="url(#pr)"/><rect x="422" y="312" width="10" height="33" fill="#ff0000"/><rect x="432" y="345" width="2" height="19" fill="url(#pr)"/><rect x="432" y="313" width="2" height="32" fill="#ff0000"/><rect x="434" y="346" width="6" height="18" fill="url(#pr)"/><rect x="434" y="313" width="6" height="33" fill="#ff0000"/><rect x="440" y="346" width="10" height="18" fill="url(#pr)"/><rect x="440" y="314" width="10" height="32" fill="#ff0000"/><rect x="450" y="346" width="8" height="18" fill="url(#pr)"/><rect x="450" y="315" width="8" height="31" fill="#ff0000"/><rect x="458" y="346" width="3" height="18" fill="url(#pr)"/><rect x="458" y="316" width="3" height="30" fill="#ff0000"/><rect x="461" y="347" width="7" height="17" fill="url(#pr)"/><rect x="461" y="316" width="7" height="31" fill="#ff0000"/><rect x="468" y="347" width="7" height="17" fill="url(#pr)"/><rect x="468" y="317" width="7" height="30" fill="#ff0000"/><rect x="475" y="347" width="7" height="17" fill="url(#pr)"/><rect x="475" y="318" width="7" height="29" fill="#ff0000"/><rect x="482" y="348" width="2" height="16" fill="url(#pr)"/><rect x="482" y="318" width="2" height="30" fill="#ff0000"/><rect x="484" y="348" width="7" height="16" fill="url(#pr)"/><rect x="484" y="319" width="7" height="29" fill="#ff0000"/><rect x="491" y="348" width="9" height="16" fill="url(#pr)"/><rect x="491" y="320" width="9" height="28" fill="#ff0000"/><rect x="500" y="348" width="3" height="16" fill="url(#pr)"/><rect x="500" y="321" width="3" height="27" fill="#ff0000"/><rect x="503" y="349" width="4" height="15" fill="url(#pr)"/><rect x="503" y="321" width="4" height="28" fill="#ff0000"/><rect x="507" y="349" width="8" height="15" fill="url(#pr)"/><rect x="507" y="322" width="8" height="27" fill="#ff0000"/><rect x="515" y="349" width="7" height="15" fill="url(#pr)"/><rect x="515" y="323" width="7" height="26" fill="#ff0000"/><rect x="522" y="349" width="2" height="15" fill="url(#pr)"/><rect x="522" y="324" width="2" height="25" fill="#ff0000"/><rect x="524" y="350" width="6" height="14" fill="url(#pr)"/><rect x="524" y="324" width="6" height="26" fill="#ff0000"/><rect x="530" y="350" width="7" height="14" fill="url(#pr)"/><rect x="530" y="325" width="7" height="25" fill="#ff0000"/><rect x="537" y="350" width="7" height="14" fill="url(#pr)"/><rect x="537" y="326" width="7" height="24" fill="#ff0000"/><rect x="544" y="350" width="2" height="14" fill="url(#pr)"/><rect x="544" y="327" width="2" height="23" fill="#ff0000"/><rect x="546" y="351" width="6" height="13" fill="url(#pr)"/><rect x="546" y="327" width="6" height="24" fill="#ff0000"/><rect x="552" y="351" width="7" height="13" fill="url(#pr)"/><rect x="552" y="328" width="7" height="23" fill="#ff0000"/><rect x="559" y="351" width="6" height="13" fill="url(#pr)"/><rect x="559" y="329" width="6" height="22" fill="#ff0000"/><rect x="565" y="352" width="1" height="12" fill="url(#pr)"/><rect x="565" y="329" width="1" height="23" fill="#ff0000"/><rect x="566" y="352" width="8" height="12" fill="url(#pr)"/><rect x="566" y="330" width="8" height="22" fill="#ff0000"/><rect x="574" y="352" width="7" height="12" fill="url(#pr)"/><rect x="574" y="331" width="7" height="21" fill="#ff0000"/><rect x="581" y="352" width="7" height="12" fill="url(#pr)"/><rect x="581" y="332" width="7" height="20" fill="#ff0000"/><rect x="588" y="353" width="1" height="11" fill="url(#pr)"/><rect x="588" y="332" width="1" height="21" fill="#ff0000"/><rect x="589" y="353" width="7" height="11" fill="url(#pr)"/><rect x="589" y="333" width="7" height="20" fill="#ff0000"/><rect x="596" y="353" width="7" height="11" fill="url(#pr)"/><rect x="596" y="334" width="7" height="19" fill="#ff0000"/><rect x="603" y="353" width="6" height="11" fill="url(#pr)"/><rect x="603" y="335" width="6" height="18" fill="#ff0000"/><rect x="609" y="354" width="2" height="10" fill="url(#pr)"/><rect x="609" y="335" width="2" height="19" fill="#ff0000"/><rect x="611" y="354" width="7" height="10" fill="url(#pr)"/><rect x="611" y="336" width="7" height="18" fill="#ff0000"/><rect x="618" y="354" width="8" height="10" fill="url(#pr)"/><rect x="618" y="337" width="8" height="17" fill="#ff0000"/><rect x="626" y="354" width="5" height="10" fill="url(#pr)"/><rect x="626" y="338" width="5" height="16" fill="#ff0000"/><rect x="631" y="355" width="2" height="9" fill="url(#pr)"/><rect x="631" y="338" width="2" height="17" fill="#ff0000"/><rect x="633" y="355" width="7" height="9" fill="url(#pr)"/><rect x="633" y="339" width="7" height="16" fill="#ff0000"/><rect x="640" y="355" width="7" height="9" fill="url(#pr)"/><rect x="640" y="340" width="7" height="15" fill="#ff0000"/><rect x="647" y="356" width="1" height="8" fill="url(#pr)"/><rect x="647" y="340" width="1" height="16" fill="#ff0000"/><rect x="648" y="356" width="7" height="8" fill="url(#pr)"/><rect x="648" y="341" width="7" height="15" fill="#ff0000"/><rect x="655" y="356" width="8" height="8" fill="url(#pr)"/><rect x="655" y="342" width="8" height="14" fill="#ff0000"/><rect x="663" y="356" width="3" height="8" fill="url(#pr)"/><rect x="663" y="343" width="3" height="13" fill="#ff0000"/><rect x="666" y="357" width="4" height="7" fill="url(#pr)"/><rect x="666" y="343" width="4" height="14" fill="#ff0000"/><rect x="670" y="357" width="7" height="7" fill="url(#pr)"/><rect x="670" y="344" width="7" height="13" fill="#ff0000"/><rect x="677" y="357" width="8" height="7" fill="url(#pr)"/><rect x="677" y="345" width="8" height="12" fill="#ff0000"/><rect x="685" y="357" width="1" height="7" fill="url(#pr)"/><rect x="685" y="346" width="1" height="11" fill="#ff0000"/><rect x="686" y="358" width="6" height="6" fill="url(#pr)"/><rect x="686" y="346" width="6" height="12" fill="#ff0000"/><rect x="692" y="358" width="8" height="6" fill="url(#pr)"/><rect x="692" y="347" width="8" height="11" fill="#ff0000"/><rect x="700" y="358" width="6" height="6" fill="url(#pr)"/><rect x="700" y="348" width="6" height="10" fill="#ff0000"/><rect x="706" y="359" width="1" height="5" fill="url(#pr)"/><rect x="706" y="348" width="1" height="11" fill="#ff0000"/><rect x="707" y="359" width="8" height="5" fill="url(#pr)"/><rect x="707" y="349" width="8" height="10" fill="#ff0000"/><rect x="715" y="359" width="7" height="5" fill="url(#pr)"/><rect x="715" y="350" width="7" height="9" fill="#ff0000"/><rect x="722" y="359" width="2" height="5" fill="url(#pr)"/><rect x="722" y="351" width="2" height="8" fill="#ff0000"/><g fill="#fffbf0"><rect x="221" y="298" width="1" height="66"/><rect x="231" y="298" width="1" height="66"/><rect x="241" y="299" width="1" height="65"/><rect x="251" y="299" width="1" height="65"/><rect x="261" y="300" width="1" height="64"/><rect x="271" y="300" width="1" height="64"/><rect x="281" y="300" width="1" height="64"/><rect x="291" y="301" width="1" height="63"/><rect x="301" y="301" width="1" height="63"/><rect x="311" y="302" width="1" height="62"/><rect x="321" y="302" width="1" height="62"/><rect x="331" y="302" width="1" height="62"/><rect x="341" y="303" width="1" height="61"/><rect x="351" y="304" width="1" height="60"/><rect x="361" y="305" width="1" height="59"/><rect x="371" y="306" width="1" height="58"/><rect x="381" y="307" width="1" height="57"/><rect x="391" y="308" width="1" height="56"/><rect x="401" y="309" width="1" height="55"/><rect x="411" y="310" width="1" height="54"/><rect x="421" y="311" width="1" height="53"/><rect x="431" y="312" width="1" height="52"/><rect x="441" y="314" width="1" height="50"/><rect x="451" y="315" width="1" height="49"/><rect x="461" y="316" width="1" height="48"/><rect x="471" y="317" width="1" height="47"/><rect x="481" y="318" width="1" height="46"/><rect x="491" y="320" width="1" height="44"/><rect x="501" y="321" width="1" height="43"/><rect x="511" y="322" width="1" height="42"/><rect x="521" y="323" width="1" height="41"/><rect x="531" y="325" width="1" height="39"/><rect x="541" y="326" width="1" height="38"/><rect x="551" y="327" width="1" height="37"/><rect x="561" y="329" width="1" height="35"/><rect x="571" y="330" width="1" height="34"/><rect x="581" y="332" width="1" height="32"/><rect x="591" y="333" width="1" height="31"/><rect x="601" y="334" width="1" height="30"/><rect x="611" y="336" width="1" height="28"/><rect x="621" y="337" width="1" height="27"/><rect x="631" y="338" width="1" height="26"/><rect x="641" y="340" width="1" height="24"/><rect x="651" y="341" width="1" height="23"/><rect x="661" y="342" width="1" height="22"/><rect x="671" y="344" width="1" height="20"/><rect x="681" y="345" width="1" height="19"/><rect x="691" y="346" width="1" height="18"/><rect x="701" y="348" width="1" height="16"/><rect x="711" y="349" width="1" height="15"/><rect x="721" y="350" width="1" height="14"/></g><g fill="#000"><rect x="220" y="341" width="14" height="1"/><rect x="220" y="298" width="14" height="1"/><rect x="234" y="341" width="24" height="1"/><rect x="234" y="299" width="24" height="1"/><rect x="258" y="341" width="26" height="1"/><rect x="258" y="300" width="26" height="1"/><rect x="284" y="342" width="1" height="1"/><rect x="284" y="300" width="1" height="1"/><rect x="285" y="342" width="23" height="1"/><rect x="285" y="301" width="23" height="1"/><rect x="308" y="342" width="27" height="1"/><rect x="308" y="302" width="27" height="1"/><rect x="335" y="342" width="16" height="1"/><rect x="335" y="303" width="16" height="1"/><rect x="351" y="342" width="9" height="1"/><rect x="351" y="304" width="9" height="1"/><rect x="360" y="343" width="1" height="1"/><rect x="360" y="304" width="1" height="1"/><rect x="361" y="343" width="8" height="1"/><rect x="361" y="305" width="8" height="1"/><rect x="369" y="343" width="10" height="1"/><rect x="369" y="306" width="10" height="1"/><rect x="379" y="343" width="5" height="1"/><rect x="379" y="307" width="5" height="1"/><rect x="384" y="344" width="3" height="1"/><rect x="384" y="307" width="3" height="1"/><rect x="387" y="344" width="10" height="1"/><rect x="387" y="308" width="10" height="1"/><rect x="397" y="344" width="8" height="1"/><rect x="397" y="309" width="8" height="1"/><rect x="405" y="344" width="5" height="1"/><rect x="405" y="310" width="5" height="1"/><rect x="410" y="345" width="4" height="1"/><rect x="410" y="310" width="4" height="1"/><rect x="414" y="345" width="8" height="1"/><rect x="414" y="311" width="8" height="1"/><rect x="422" y="345" width="10" height="1"/><rect x="422" y="312" width="10" height="1"/><rect x="432" y="345" width="2" height="1"/><rect x="432" y="313" width="2" height="1"/><rect x="434" y="346" width="6" height="1"/><rect x="434" y="313" width="6" height="1"/><rect x="440" y="346" width="10" height="1"/><rect x="440" y="314" width="10" height="1"/><rect x="450" y="346" width="8" height="1"/><rect x="450" y="315" width="8" height="1"/><rect x="458" y="346" width="3" height="1"/><rect x="458" y="316" width="3" height="1"/><rect x="461" y="347" width="7" height="1"/><rect x="461" y="316" width="7" height="1"/><rect x="468" y="347" width="7" height="1"/><rect x="468" y="317" width="7" height="1"/><rect x="475" y="347" width="7" height="1"/><rect x="475" y="318" width="7" height="1"/><rect x="482" y="348" width="2" height="1"/><rect x="482" y="318" width="2" height="1"/><rect x="484" y="348" width="7" height="1"/><rect x="484" y="319" width="7" height="1"/><rect x="491" y="348" width="9" height="1"/><rect x="491" y="320" width="9" height="1"/><rect x="500" y="348" width="3" height="1"/><rect x="500" y="321" width="3" height="1"/><rect x="503" y="349" width="4" height="1"/><rect x="503" y="321" width="4" height="1"/><rect x="507" y="349" width="8" height="1"/><rect x="507" y="322" width="8" height="1"/><rect x="515" y="349" width="7" height="1"/><rect x="515" y="323" width="7" height="1"/><rect x="522" y="349" width="2" height="1"/><rect x="522" y="324" width="2" height="1"/><rect x="524" y="350" width="6" height="1"/><rect x="524" y="324" width="6" height="1"/><rect x="530" y="350" width="7" height="1"/><rect x="530" y="325" width="7" height="1"/><rect x="537" y="350" width="7" height="1"/><rect x="537" y="326" width="7" height="1"/><rect x="544" y="350" width="2" height="1"/><rect x="544" y="327" width="2" height="1"/><rect x="546" y="351" width="6" height="1"/><rect x="546" y="327" width="6" height="1"/><rect x="552" y="351" width="7" height="1"/><rect x="552" y="328" width="7" height="1"/><rect x="559" y="351" width="6" height="1"/><rect x="559" y="329" width="6" height="1"/><rect x="565" y="352" width="1" height="1"/><rect x="565" y="329" width="1" height="1"/><rect x="566" y="352" width="8" height="1"/><rect x="566" y="330" width="8" height="1"/><rect x="574" y="352" width="7" height="1"/><rect x="574" y="331" width="7" height="1"/><rect x="581" y="352" width="7" height="1"/><rect x="581" y="332" width="7" height="1"/><rect x="588" y="353" width="1" height="1"/><rect x="588" y="332" width="1" height="1"/><rect x="589" y="353" width="7" height="1"/><rect x="589" y="333" width="7" height="1"/><rect x="596" y="353" width="7" height="1"/><rect x="596" y="334" width="7" height="1"/><rect x="603" y="353" width="6" height="1"/><rect x="603" y="335" width="6" height="1"/><rect x="609" y="354" width="2" height="1"/><rect x="609" y="335" width="2" height="1"/><rect x="611" y="354" width="7" height="1"/><rect x="611" y="336" width="7" height="1"/><rect x="618" y="354" width="8" height="1"/><rect x="618" y="337" width="8" height="1"/><rect x="626" y="354" width="5" height="1"/><rect x="626" y="338" width="5" height="1"/><rect x="631" y="355" width="2" height="1"/><rect x="631" y="338" width="2" height="1"/><rect x="633" y="355" width="7" height="1"/><rect x="633" y="339" width="7" height="1"/><rect x="640" y="355" width="7" height="1"/><rect x="640" y="340" width="7" height="1"/><rect x="647" y="356" width="1" height="1"/><rect x="647" y="340" width="1" height="1"/><rect x="648" y="356" width="7" height="1"/><rect x="648" y="341" width="7" height="1"/><rect x="655" y="356" width="8" height="1"/><rect x="655" y="342" width="8" height="1"/><rect x="663" y="356" width="3" height="1"/><rect x="663" y="343" width="3" height="1"/><rect x="666" y="357" width="4" height="1"/><rect x="666" y="343" width="4" height="1"/><rect x="670" y="357" width="7" height="1"/><rect x="670" y="344" width="7" height="1"/><rect x="677" y="357" width="8" height="1"/><rect x="677" y="345" width="8" height="1"/><rect x="685" y="357" width="1" height="1"/><rect x="685" y="346" width="1" height="1"/><rect x="686" y="358" width="6" height="1"/><rect x="686" y="346" width="6" height="1"/><rect x="692" y="358" width="8" height="1"/><rect x="692" y="347" width="8" height="1"/><rect x="700" y="358" width="6" height="1"/><rect x="700" y="348" width="6" height="1"/><rect x="706" y="359" width="1" height="1"/><rect x="706" y="348" width="1" height="1"/><rect x="707" y="359" width="8" height="1"/><rect x="707" y="349" width="8" height="1"/><rect x="715" y="359" width="7" height="1"/><rect x="715" y="350" width="7" height="1"/><rect x="722" y="359" width="2" height="1"/><rect x="722" y="351" width="2" height="1"/><rect x="220" y="363" width="504" height="3"/><rect x="216" y="286" width="1" height="95"/><rect x="214" y="373" width="2" height="1"/><rect x="214" y="364" width="2" height="1"/><rect x="214" y="355" width="2" height="1"/><rect x="214" y="347" width="2" height="1"/><rect x="214" y="338" width="2" height="1"/><rect x="214" y="330" width="2" height="1"/><rect x="214" y="321" width="2" height="1"/><rect x="214" y="312" width="2" height="1"/><rect x="214" y="304" width="2" height="1"/><rect x="214" y="295" width="2" height="1"/><rect x="214" y="287" width="2" height="1"/><rect x="211" y="321" width="5" height="1"/><rect x="211" y="364" width="5" height="1"/><rect x="214" y="376" width="5" height="2"/><rect x="215" y="378" width="3" height="2"/><rect x="216" y="380" width="1" height="3"/></g><text transform="translate(203,320.7) rotate(90)" text-anchor="middle" font-size="12" shape-rendering="auto">-5</text><text transform="translate(203,363.7) rotate(90)" text-anchor="middle" font-size="12" shape-rendering="auto">0</text><line x1="220.5" y1="298.5" x2="225.5" y2="293.5" stroke="#000" stroke-width="1" shape-rendering="auto"/><rect x="225.5" y="281.5" width="45" height="12" fill="#ffff00" stroke="#000" stroke-width="1"/><text x="248.5" y="290.6" text-anchor="middle" font-size="11.67" stroke="#000" stroke-width="0.35" shape-rendering="auto">-7.644</text><line x1="220.5" y1="397" x2="220.5" y2="487" stroke="#505050" stroke-width="1" stroke-dasharray="1 3"/><line x1="291.5" y1="397" x2="291.5" y2="487" stroke="#505050" stroke-width="1" stroke-dasharray="1 3"/><line x1="363.5" y1="397" x2="363.5" y2="487" stroke="#505050" stroke-width="1" stroke-dasharray="1 3"/><line x1="434.5" y1="397" x2="434.5" y2="487" stroke="#505050" stroke-width="1" stroke-dasharray="1 3"/><line x1="505.5" y1="397" x2="505.5" y2="487" stroke="#505050" stroke-width="1" stroke-dasharray="1 3"/><line x1="577.5" y1="397" x2="577.5" y2="487" stroke="#505050" stroke-width="1" stroke-dasharray="1 3"/><line x1="648.5" y1="397" x2="648.5" y2="487" stroke="#505050" stroke-width="1" stroke-dasharray="1 3"/><line x1="719.5" y1="397" x2="719.5" y2="487" stroke="#505050" stroke-width="1" stroke-dasharray="1 3"/><rect x="220" y="448" width="23" height="16" fill="url(#pr)"/><rect x="220" y="416" width="23" height="32" fill="#ff0000"/><rect x="243" y="448" width="41" height="16" fill="url(#pr)"/><rect x="243" y="417" width="41" height="31" fill="#ff0000"/><rect x="284" y="448" width="43" height="16" fill="url(#pr)"/><rect x="284" y="418" width="43" height="30" fill="#ff0000"/><rect x="327" y="448" width="26" height="16" fill="url(#pr)"/><rect x="327" y="419" width="26" height="29" fill="#ff0000"/><rect x="353" y="448" width="13" height="16" fill="url(#pr)"/><rect x="353" y="420" width="13" height="28" fill="#ff0000"/><rect x="366" y="448" width="1" height="16" fill="url(#pr)"/><rect x="366" y="421" width="1" height="27" fill="#ff0000"/><rect x="367" y="449" width="11" height="15" fill="url(#pr)"/><rect x="367" y="421" width="11" height="28" fill="#ff0000"/><rect x="378" y="449" width="13" height="15" fill="url(#pr)"/><rect x="378" y="422" width="13" height="27" fill="#ff0000"/><rect x="391" y="449" width="12" height="15" fill="url(#pr)"/><rect x="391" y="423" width="12" height="26" fill="#ff0000"/><rect x="403" y="449" width="6" height="15" fill="url(#pr)"/><rect x="403" y="424" width="6" height="25" fill="#ff0000"/><rect x="409" y="450" width="7" height="14" fill="url(#pr)"/><rect x="409" y="424" width="7" height="26" fill="#ff0000"/><rect x="416" y="450" width="12" height="14" fill="url(#pr)"/><rect x="416" y="425" width="12" height="25" fill="#ff0000"/><rect x="428" y="450" width="13" height="14" fill="url(#pr)"/><rect x="428" y="426" width="13" height="24" fill="#ff0000"/><rect x="441" y="450" width="12" height="14" fill="url(#pr)"/><rect x="441" y="427" width="12" height="23" fill="#ff0000"/><rect x="453" y="451" width="13" height="13" fill="url(#pr)"/><rect x="453" y="428" width="13" height="23" fill="#ff0000"/><rect x="466" y="451" width="10" height="13" fill="url(#pr)"/><rect x="466" y="429" width="10" height="22" fill="#ff0000"/><rect x="476" y="451" width="8" height="13" fill="url(#pr)"/><rect x="476" y="430" width="8" height="21" fill="#ff0000"/><rect x="484" y="452" width="3" height="12" fill="url(#pr)"/><rect x="484" y="430" width="3" height="22" fill="#ff0000"/><rect x="487" y="452" width="9" height="12" fill="url(#pr)"/><rect x="487" y="431" width="9" height="21" fill="#ff0000"/><rect x="496" y="452" width="9" height="12" fill="url(#pr)"/><rect x="496" y="432" width="9" height="20" fill="#ff0000"/><rect x="505" y="452" width="6" height="12" fill="url(#pr)"/><rect x="505" y="433" width="6" height="19" fill="#ff0000"/><rect x="511" y="453" width="3" height="11" fill="url(#pr)"/><rect x="511" y="433" width="3" height="20" fill="#ff0000"/><rect x="514" y="453" width="9" height="11" fill="url(#pr)"/><rect x="514" y="434" width="9" height="19" fill="#ff0000"/><rect x="523" y="453" width="10" height="11" fill="url(#pr)"/><rect x="523" y="435" width="10" height="18" fill="#ff0000"/><rect x="533" y="453" width="2" height="11" fill="url(#pr)"/><rect x="533" y="436" width="2" height="17" fill="#ff0000"/><rect x="535" y="454" width="7" height="10" fill="url(#pr)"/><rect x="535" y="436" width="7" height="18" fill="#ff0000"/><rect x="542" y="454" width="9" height="10" fill="url(#pr)"/><rect x="542" y="437" width="9" height="17" fill="#ff0000"/><rect x="551" y="454" width="10" height="10" fill="url(#pr)"/><rect x="551" y="438" width="10" height="16" fill="#ff0000"/><rect x="561" y="455" width="9" height="9" fill="url(#pr)"/><rect x="561" y="439" width="9" height="16" fill="#ff0000"/><rect x="570" y="455" width="10" height="9" fill="url(#pr)"/><rect x="570" y="440" width="10" height="15" fill="#ff0000"/><rect x="580" y="455" width="5" height="9" fill="url(#pr)"/><rect x="580" y="441" width="5" height="14" fill="#ff0000"/><rect x="585" y="456" width="5" height="8" fill="url(#pr)"/><rect x="585" y="441" width="5" height="15" fill="#ff0000"/><rect x="590" y="456" width="10" height="8" fill="url(#pr)"/><rect x="590" y="442" width="10" height="14" fill="#ff0000"/><rect x="600" y="456" width="10" height="8" fill="url(#pr)"/><rect x="600" y="443" width="10" height="13" fill="#ff0000"/><rect x="610" y="456" width="1" height="8" fill="url(#pr)"/><rect x="610" y="444" width="1" height="12" fill="#ff0000"/><rect x="611" y="457" width="10" height="7" fill="url(#pr)"/><rect x="611" y="444" width="10" height="13" fill="#ff0000"/><rect x="621" y="457" width="10" height="7" fill="url(#pr)"/><rect x="621" y="445" width="10" height="12" fill="#ff0000"/><rect x="631" y="457" width="4" height="7" fill="url(#pr)"/><rect x="631" y="446" width="4" height="11" fill="#ff0000"/><rect x="635" y="458" width="6" height="6" fill="url(#pr)"/><rect x="635" y="446" width="6" height="12" fill="#ff0000"/><rect x="641" y="458" width="10" height="6" fill="url(#pr)"/><rect x="641" y="447" width="10" height="11" fill="#ff0000"/><rect x="651" y="458" width="10" height="6" fill="url(#pr)"/><rect x="651" y="448" width="10" height="10" fill="#ff0000"/><rect x="661" y="459" width="9" height="5" fill="url(#pr)"/><rect x="661" y="449" width="9" height="10" fill="#ff0000"/><rect x="670" y="459" width="9" height="5" fill="url(#pr)"/><rect x="670" y="450" width="9" height="9" fill="#ff0000"/><rect x="679" y="459" width="3" height="5" fill="url(#pr)"/><rect x="679" y="451" width="3" height="8" fill="#ff0000"/><rect x="682" y="460" width="7" height="4" fill="url(#pr)"/><rect x="682" y="451" width="7" height="9" fill="#ff0000"/><rect x="689" y="460" width="9" height="4" fill="url(#pr)"/><rect x="689" y="452" width="9" height="8" fill="#ff0000"/><rect x="698" y="460" width="6" height="4" fill="url(#pr)"/><rect x="698" y="453" width="6" height="7" fill="#ff0000"/><rect x="704" y="461" width="4" height="3" fill="url(#pr)"/><rect x="704" y="453" width="4" height="8" fill="#ff0000"/><rect x="708" y="461" width="9" height="3" fill="url(#pr)"/><rect x="708" y="454" width="9" height="7" fill="#ff0000"/><rect x="717" y="461" width="7" height="3" fill="url(#pr)"/><rect x="717" y="455" width="7" height="6" fill="#ff0000"/><g fill="#fffbf0"><rect x="221" y="416" width="1" height="48"/><rect x="231" y="416" width="1" height="48"/><rect x="241" y="416" width="1" height="48"/><rect x="251" y="417" width="1" height="47"/><rect x="261" y="417" width="1" height="47"/><rect x="271" y="417" width="1" height="47"/><rect x="281" y="417" width="1" height="47"/><rect x="291" y="418" width="1" height="46"/><rect x="301" y="418" width="1" height="46"/><rect x="311" y="418" width="1" height="46"/><rect x="321" y="418" width="1" height="46"/><rect x="331" y="419" width="1" height="45"/><rect x="341" y="419" width="1" height="45"/><rect x="351" y="419" width="1" height="45"/><rect x="361" y="420" width="1" height="44"/><rect x="371" y="421" width="1" height="43"/><rect x="381" y="422" width="1" height="42"/><rect x="391" y="423" width="1" height="41"/><rect x="401" y="423" width="1" height="41"/><rect x="411" y="424" width="1" height="40"/><rect x="421" y="425" width="1" height="39"/><rect x="431" y="426" width="1" height="38"/><rect x="441" y="427" width="1" height="37"/><rect x="451" y="427" width="1" height="37"/><rect x="461" y="428" width="1" height="36"/><rect x="471" y="429" width="1" height="35"/><rect x="481" y="430" width="1" height="34"/><rect x="491" y="431" width="1" height="33"/><rect x="501" y="432" width="1" height="32"/><rect x="511" y="433" width="1" height="31"/><rect x="521" y="434" width="1" height="30"/><rect x="531" y="435" width="1" height="29"/><rect x="541" y="436" width="1" height="28"/><rect x="551" y="438" width="1" height="26"/><rect x="561" y="439" width="1" height="25"/><rect x="571" y="440" width="1" height="24"/><rect x="581" y="441" width="1" height="23"/><rect x="591" y="442" width="1" height="22"/><rect x="601" y="443" width="1" height="21"/><rect x="611" y="444" width="1" height="20"/><rect x="621" y="445" width="1" height="19"/><rect x="631" y="446" width="1" height="18"/><rect x="641" y="447" width="1" height="17"/><rect x="651" y="448" width="1" height="16"/><rect x="661" y="449" width="1" height="15"/><rect x="671" y="450" width="1" height="14"/><rect x="681" y="451" width="1" height="13"/><rect x="691" y="452" width="1" height="12"/><rect x="701" y="453" width="1" height="11"/><rect x="711" y="454" width="1" height="10"/><rect x="721" y="455" width="1" height="9"/></g><g fill="#000"><rect x="220" y="448" width="23" height="1"/><rect x="220" y="416" width="23" height="1"/><rect x="243" y="448" width="41" height="1"/><rect x="243" y="417" width="41" height="1"/><rect x="284" y="448" width="43" height="1"/><rect x="284" y="418" width="43" height="1"/><rect x="327" y="448" width="26" height="1"/><rect x="327" y="419" width="26" height="1"/><rect x="353" y="448" width="13" height="1"/><rect x="353" y="420" width="13" height="1"/><rect x="366" y="448" width="1" height="1"/><rect x="366" y="421" width="1" height="1"/><rect x="367" y="449" width="11" height="1"/><rect x="367" y="421" width="11" height="1"/><rect x="378" y="449" width="13" height="1"/><rect x="378" y="422" width="13" height="1"/><rect x="391" y="449" width="12" height="1"/><rect x="391" y="423" width="12" height="1"/><rect x="403" y="449" width="6" height="1"/><rect x="403" y="424" width="6" height="1"/><rect x="409" y="450" width="7" height="1"/><rect x="409" y="424" width="7" height="1"/><rect x="416" y="450" width="12" height="1"/><rect x="416" y="425" width="12" height="1"/><rect x="428" y="450" width="13" height="1"/><rect x="428" y="426" width="13" height="1"/><rect x="441" y="450" width="12" height="1"/><rect x="441" y="427" width="12" height="1"/><rect x="453" y="451" width="13" height="1"/><rect x="453" y="428" width="13" height="1"/><rect x="466" y="451" width="10" height="1"/><rect x="466" y="429" width="10" height="1"/><rect x="476" y="451" width="8" height="1"/><rect x="476" y="430" width="8" height="1"/><rect x="484" y="452" width="3" height="1"/><rect x="484" y="430" width="3" height="1"/><rect x="487" y="452" width="9" height="1"/><rect x="487" y="431" width="9" height="1"/><rect x="496" y="452" width="9" height="1"/><rect x="496" y="432" width="9" height="1"/><rect x="505" y="452" width="6" height="1"/><rect x="505" y="433" width="6" height="1"/><rect x="511" y="453" width="3" height="1"/><rect x="511" y="433" width="3" height="1"/><rect x="514" y="453" width="9" height="1"/><rect x="514" y="434" width="9" height="1"/><rect x="523" y="453" width="10" height="1"/><rect x="523" y="435" width="10" height="1"/><rect x="533" y="453" width="2" height="1"/><rect x="533" y="436" width="2" height="1"/><rect x="535" y="454" width="7" height="1"/><rect x="535" y="436" width="7" height="1"/><rect x="542" y="454" width="9" height="1"/><rect x="542" y="437" width="9" height="1"/><rect x="551" y="454" width="10" height="1"/><rect x="551" y="438" width="10" height="1"/><rect x="561" y="455" width="9" height="1"/><rect x="561" y="439" width="9" height="1"/><rect x="570" y="455" width="10" height="1"/><rect x="570" y="440" width="10" height="1"/><rect x="580" y="455" width="5" height="1"/><rect x="580" y="441" width="5" height="1"/><rect x="585" y="456" width="5" height="1"/><rect x="585" y="441" width="5" height="1"/><rect x="590" y="456" width="10" height="1"/><rect x="590" y="442" width="10" height="1"/><rect x="600" y="456" width="10" height="1"/><rect x="600" y="443" width="10" height="1"/><rect x="610" y="456" width="1" height="1"/><rect x="610" y="444" width="1" height="1"/><rect x="611" y="457" width="10" height="1"/><rect x="611" y="444" width="10" height="1"/><rect x="621" y="457" width="10" height="1"/><rect x="621" y="445" width="10" height="1"/><rect x="631" y="457" width="4" height="1"/><rect x="631" y="446" width="4" height="1"/><rect x="635" y="458" width="6" height="1"/><rect x="635" y="446" width="6" height="1"/><rect x="641" y="458" width="10" height="1"/><rect x="641" y="447" width="10" height="1"/><rect x="651" y="458" width="10" height="1"/><rect x="651" y="448" width="10" height="1"/><rect x="661" y="459" width="9" height="1"/><rect x="661" y="449" width="9" height="1"/><rect x="670" y="459" width="9" height="1"/><rect x="670" y="450" width="9" height="1"/><rect x="679" y="459" width="3" height="1"/><rect x="679" y="451" width="3" height="1"/><rect x="682" y="460" width="7" height="1"/><rect x="682" y="451" width="7" height="1"/><rect x="689" y="460" width="9" height="1"/><rect x="689" y="452" width="9" height="1"/><rect x="698" y="460" width="6" height="1"/><rect x="698" y="453" width="6" height="1"/><rect x="704" y="461" width="4" height="1"/><rect x="704" y="453" width="4" height="1"/><rect x="708" y="461" width="9" height="1"/><rect x="708" y="454" width="9" height="1"/><rect x="717" y="461" width="7" height="1"/><rect x="717" y="455" width="7" height="1"/><rect x="220" y="463" width="504" height="3"/><rect x="216" y="395" width="1" height="95"/><rect x="214" y="464" width="2" height="1"/><rect x="214" y="447" width="2" height="1"/><rect x="214" y="430" width="2" height="1"/><rect x="214" y="412" width="2" height="1"/><rect x="214" y="395" width="2" height="1"/><rect x="211" y="464" width="5" height="1"/><rect x="214" y="485" width="5" height="2"/><rect x="215" y="487" width="3" height="2"/><rect x="216" y="489" width="1" height="3"/></g><text transform="translate(203,463.7) rotate(90)" text-anchor="middle" font-size="12" shape-rendering="auto">0</text><line x1="220.5" y1="416.5" x2="225.5" y2="411.5" stroke="#000" stroke-width="1" shape-rendering="auto"/><rect x="225.5" y="399.5" width="45" height="12" fill="#ffff00" stroke="#000" stroke-width="1"/><text x="248.5" y="408.6" text-anchor="middle" font-size="11.67" stroke="#000" stroke-width="0.35" shape-rendering="auto">-5.648</text><line x1="220.5" y1="506" x2="220.5" y2="596" stroke="#505050" stroke-width="1" stroke-dasharray="1 3"/><line x1="291.5" y1="506" x2="291.5" y2="596" stroke="#505050" stroke-width="1" stroke-dasharray="1 3"/><line x1="363.5" y1="506" x2="363.5" y2="596" stroke="#505050" stroke-width="1" stroke-dasharray="1 3"/><line x1="434.5" y1="506" x2="434.5" y2="596" stroke="#505050" stroke-width="1" stroke-dasharray="1 3"/><line x1="505.5" y1="506" x2="505.5" y2="596" stroke="#505050" stroke-width="1" stroke-dasharray="1 3"/><line x1="577.5" y1="506" x2="577.5" y2="596" stroke="#505050" stroke-width="1" stroke-dasharray="1 3"/><line x1="648.5" y1="506" x2="648.5" y2="596" stroke="#505050" stroke-width="1" stroke-dasharray="1 3"/><line x1="719.5" y1="506" x2="719.5" y2="596" stroke="#505050" stroke-width="1" stroke-dasharray="1 3"/><rect x="220" y="545" width="504" height="37" fill="url(#pr)"/><rect x="220" y="516" width="504" height="29" fill="#ff0000"/><g fill="#fffbf0"><rect x="221" y="516" width="1" height="66"/><rect x="231" y="516" width="1" height="66"/><rect x="241" y="516" width="1" height="66"/><rect x="251" y="516" width="1" height="66"/><rect x="261" y="516" width="1" height="66"/><rect x="271" y="516" width="1" height="66"/><rect x="281" y="516" width="1" height="66"/><rect x="291" y="516" width="1" height="66"/><rect x="301" y="516" width="1" height="66"/><rect x="311" y="516" width="1" height="66"/><rect x="321" y="516" width="1" height="66"/><rect x="331" y="516" width="1" height="66"/><rect x="341" y="516" width="1" height="66"/><rect x="351" y="516" width="1" height="66"/><rect x="361" y="516" width="1" height="66"/><rect x="371" y="516" width="1" height="66"/><rect x="381" y="516" width="1" height="66"/><rect x="391" y="516" width="1" height="66"/><rect x="401" y="516" width="1" height="66"/><rect x="411" y="516" width="1" height="66"/><rect x="421" y="516" width="1" height="66"/><rect x="431" y="516" width="1" height="66"/><rect x="441" y="516" width="1" height="66"/><rect x="451" y="516" width="1" height="66"/><rect x="461" y="516" width="1" height="66"/><rect x="471" y="516" width="1" height="66"/><rect x="481" y="516" width="1" height="66"/><rect x="491" y="516" width="1" height="66"/><rect x="501" y="516" width="1" height="66"/><rect x="511" y="516" width="1" height="66"/><rect x="521" y="516" width="1" height="66"/><rect x="531" y="516" width="1" height="66"/><rect x="541" y="516" width="1" height="66"/><rect x="551" y="516" width="1" height="66"/><rect x="561" y="516" width="1" height="66"/><rect x="571" y="516" width="1" height="66"/><rect x="581" y="516" width="1" height="66"/><rect x="591" y="516" width="1" height="66"/><rect x="601" y="516" width="1" height="66"/><rect x="611" y="516" width="1" height="66"/><rect x="621" y="516" width="1" height="66"/><rect x="631" y="516" width="1" height="66"/><rect x="641" y="516" width="1" height="66"/><rect x="651" y="516" width="1" height="66"/><rect x="661" y="516" width="1" height="66"/><rect x="671" y="516" width="1" height="66"/><rect x="681" y="516" width="1" height="66"/><rect x="691" y="516" width="1" height="66"/><rect x="701" y="516" width="1" height="66"/><rect x="711" y="516" width="1" height="66"/><rect x="721" y="516" width="1" height="66"/></g><g fill="#000"><rect x="220" y="545" width="504" height="1"/><rect x="220" y="516" width="504" height="1"/><rect x="220" y="581" width="504" height="3"/><rect x="216" y="504" width="1" height="95"/><rect x="214" y="582" width="2" height="1"/><rect x="214" y="570" width="2" height="1"/><rect x="214" y="557" width="2" height="1"/><rect x="214" y="545" width="2" height="1"/><rect x="214" y="533" width="2" height="1"/><rect x="214" y="520" width="2" height="1"/><rect x="214" y="508" width="2" height="1"/><rect x="211" y="520" width="5" height="1"/><rect x="211" y="582" width="5" height="1"/><rect x="214" y="594" width="5" height="2"/><rect x="215" y="596" width="3" height="2"/><rect x="216" y="598" width="1" height="3"/></g><text transform="translate(203,581.7) rotate(90)" text-anchor="middle" font-size="12" shape-rendering="auto">0</text><line x1="220.5" y1="516.5" x2="225.5" y2="511.5" stroke="#000" stroke-width="1" shape-rendering="auto"/><rect x="225.5" y="499.5" width="52" height="12" fill="#ffff00" stroke="#000" stroke-width="1"/><text x="252.0" y="508.6" text-anchor="middle" font-size="11.67" stroke="#000" stroke-width="0.35" shape-rendering="auto">-10636.</text><line x1="220.5" y1="615" x2="220.5" y2="704" stroke="#505050" stroke-width="1" stroke-dasharray="1 3"/><line x1="291.5" y1="615" x2="291.5" y2="704" stroke="#505050" stroke-width="1" stroke-dasharray="1 3"/><line x1="363.5" y1="615" x2="363.5" y2="704" stroke="#505050" stroke-width="1" stroke-dasharray="1 3"/><line x1="434.5" y1="615" x2="434.5" y2="704" stroke="#505050" stroke-width="1" stroke-dasharray="1 3"/><line x1="505.5" y1="615" x2="505.5" y2="704" stroke="#505050" stroke-width="1" stroke-dasharray="1 3"/><line x1="577.5" y1="615" x2="577.5" y2="704" stroke="#505050" stroke-width="1" stroke-dasharray="1 3"/><line x1="648.5" y1="615" x2="648.5" y2="704" stroke="#505050" stroke-width="1" stroke-dasharray="1 3"/><line x1="719.5" y1="615" x2="719.5" y2="704" stroke="#505050" stroke-width="1" stroke-dasharray="1 3"/><rect x="220" y="625" width="504" height="24" fill="url(#pb)"/><rect x="220" y="649" width="504" height="42" fill="#0000ff"/><g fill="#fffbf0"><rect x="221" y="625" width="1" height="66"/><rect x="231" y="625" width="1" height="66"/><rect x="241" y="625" width="1" height="66"/><rect x="251" y="625" width="1" height="66"/><rect x="261" y="625" width="1" height="66"/><rect x="271" y="625" width="1" height="66"/><rect x="281" y="625" width="1" height="66"/><rect x="291" y="625" width="1" height="66"/><rect x="301" y="625" width="1" height="66"/><rect x="311" y="625" width="1" height="66"/><rect x="321" y="625" width="1" height="66"/><rect x="331" y="625" width="1" height="66"/><rect x="341" y="625" width="1" height="66"/><rect x="351" y="625" width="1" height="66"/><rect x="361" y="625" width="1" height="66"/><rect x="371" y="625" width="1" height="66"/><rect x="381" y="625" width="1" height="66"/><rect x="391" y="625" width="1" height="66"/><rect x="401" y="625" width="1" height="66"/><rect x="411" y="625" width="1" height="66"/><rect x="421" y="625" width="1" height="66"/><rect x="431" y="625" width="1" height="66"/><rect x="441" y="625" width="1" height="66"/><rect x="451" y="625" width="1" height="66"/><rect x="461" y="625" width="1" height="66"/><rect x="471" y="625" width="1" height="66"/><rect x="481" y="625" width="1" height="66"/><rect x="491" y="625" width="1" height="66"/><rect x="501" y="625" width="1" height="66"/><rect x="511" y="625" width="1" height="66"/><rect x="521" y="625" width="1" height="66"/><rect x="531" y="625" width="1" height="66"/><rect x="541" y="625" width="1" height="66"/><rect x="551" y="625" width="1" height="66"/><rect x="561" y="625" width="1" height="66"/><rect x="571" y="625" width="1" height="66"/><rect x="581" y="625" width="1" height="66"/><rect x="591" y="625" width="1" height="66"/><rect x="601" y="625" width="1" height="66"/><rect x="611" y="625" width="1" height="66"/><rect x="621" y="625" width="1" height="66"/><rect x="631" y="625" width="1" height="66"/><rect x="641" y="625" width="1" height="66"/><rect x="651" y="625" width="1" height="66"/><rect x="661" y="625" width="1" height="66"/><rect x="671" y="625" width="1" height="66"/><rect x="681" y="625" width="1" height="66"/><rect x="691" y="625" width="1" height="66"/><rect x="701" y="625" width="1" height="66"/><rect x="711" y="625" width="1" height="66"/><rect x="721" y="625" width="1" height="66"/></g><g fill="#000"><rect x="220" y="649" width="504" height="1"/><rect x="220" y="691" width="504" height="1"/><rect x="220" y="624" width="504" height="3"/><rect x="216" y="613" width="1" height="95"/><rect x="214" y="617" width="2" height="1"/><rect x="214" y="625" width="2" height="1"/><rect x="214" y="633" width="2" height="1"/><rect x="214" y="642" width="2" height="1"/><rect x="214" y="650" width="2" height="1"/><rect x="214" y="659" width="2" height="1"/><rect x="214" y="667" width="2" height="1"/><rect x="214" y="675" width="2" height="1"/><rect x="214" y="684" width="2" height="1"/><rect x="214" y="692" width="2" height="1"/><rect x="214" y="701" width="2" height="1"/><rect x="211" y="625" width="5" height="1"/><rect x="211" y="667" width="5" height="1"/><rect x="214" y="703" width="5" height="2"/><rect x="215" y="705" width="3" height="2"/><rect x="216" y="707" width="1" height="3"/></g><text transform="translate(203,624.7) rotate(90)" text-anchor="middle" font-size="12" shape-rendering="auto">0</text><text transform="translate(203,666.7) rotate(90)" text-anchor="middle" font-size="12" shape-rendering="auto">500</text><line x1="220.5" y1="691.5" x2="225.5" y2="696.5" stroke="#000" stroke-width="1" shape-rendering="auto"/><rect x="225.5" y="696.5" width="38" height="12" fill="#ffff00" stroke="#000" stroke-width="1"/><text x="245.0" y="705.6" text-anchor="middle" font-size="11.67" stroke="#000" stroke-width="0.35" shape-rendering="auto">787.1</text></svg>
<div class="mono" style="left:11px;top:195px;white-space:pre;font-size:13.33px;line-height:14px;">extremale</div>
<div class="mono" style="left:11px;top:207px;white-space:pre;font-size:13.33px;line-height:14px;">Verschiebung</div>
<div class="mono" style="left:11px;top:219px;white-space:pre;font-size:13.33px;line-height:14px;">u<span style="font-size:10px;position:relative;top:2px;display:inline-block;width:8px;">l</span> in mm</div>
<div class="mono" style="left:11px;top:231px;white-space:pre;font-size:11.67px;line-height:13px;letter-spacing:-0.1px;">Min: 0.63</div>
<div class="mono" style="left:11px;top:242px;white-space:pre;font-size:11.67px;line-height:13px;letter-spacing:-0.1px;">Max: 2.37</div>
<div class="mono" style="left:11px;top:304px;white-space:pre;font-size:13.33px;line-height:14px;">extremale</div>
<div class="mono" style="left:11px;top:316px;white-space:pre;font-size:13.33px;line-height:14px;">Durchbiegung</div>
<div class="mono" style="left:11px;top:328px;white-space:pre;font-size:13.33px;line-height:14px;">u<span style="font-size:10px;position:relative;top:2px;display:inline-block;width:8px;">m</span> in mm</div>
<div class="mono" style="left:11px;top:340px;white-space:pre;font-size:11.67px;line-height:13px;letter-spacing:-0.1px;">Min: -7.64</div>
<div class="mono" style="left:11px;top:351px;white-space:pre;font-size:11.67px;line-height:13px;letter-spacing:-0.1px;">Max: -0.52</div>
<div class="mono" style="left:11px;top:413px;white-space:pre;font-size:13.33px;line-height:14px;">extremale</div>
<div class="mono" style="left:11px;top:425px;white-space:pre;font-size:13.33px;line-height:14px;">Durchbiegung</div>
<div class="mono" style="left:11px;top:437px;white-space:pre;font-size:13.33px;line-height:14px;">u<span style="font-size:10px;position:relative;top:2px;display:inline-block;width:8px;">n</span> in mm</div>
<div class="mono" style="left:11px;top:449px;white-space:pre;font-size:11.67px;line-height:13px;letter-spacing:-0.1px;">Min: -5.65</div>
<div class="mono" style="left:11px;top:460px;white-space:pre;font-size:11.67px;line-height:13px;letter-spacing:-0.1px;">Max: -0.42</div>
<div class="mono" style="left:11px;top:522px;white-space:pre;font-size:13.33px;line-height:14px;">extremale</div>
<div class="mono" style="left:11px;top:534px;white-space:pre;font-size:13.33px;line-height:14px;">Normalkraft</div>
<div class="mono" style="left:11px;top:546px;white-space:pre;font-size:13.33px;line-height:14px;">N in kN</div>
<div class="mono" style="left:11px;top:558px;white-space:pre;font-size:11.67px;line-height:13px;letter-spacing:-0.1px;">Min: -10636.00</div>
<div class="mono" style="left:11px;top:569px;white-space:pre;font-size:11.67px;line-height:13px;letter-spacing:-0.1px;">Max: -5969.92</div>
<div class="mono" style="left:11px;top:631px;white-space:pre;font-size:13.33px;line-height:14px;">extremale</div>
<div class="mono" style="left:11px;top:643px;white-space:pre;font-size:13.33px;line-height:14px;">Querkraft</div>
<div class="mono" style="left:11px;top:655px;white-space:pre;font-size:13.33px;line-height:14px;">Q<span style="font-size:10px;position:relative;top:2px;display:inline-block;width:8px;">n</span> in kN</div>
<div class="mono" style="left:11px;top:667px;white-space:pre;font-size:11.67px;line-height:13px;letter-spacing:-0.1px;">Min: 282.81</div>
<div class="mono" style="left:11px;top:678px;white-space:pre;font-size:11.67px;line-height:13px;letter-spacing:-0.1px;">Max: 787.07</div>
<svg style="left:8px;top:723px" width="726" height="30" viewBox="8 723 726 30" shape-rendering="crispEdges"><defs><radialGradient id="ball" cx="0.35" cy="0.3" r="0.7"><stop offset="0" stop-color="#ffffff"/><stop offset="0.45" stop-color="#a8a890"/><stop offset="1" stop-color="#404030"/></radialGradient></defs><rect x="220" y="736" width="504" height="1" fill="#000"/><rect x="220" y="737" width="1" height="5" fill="#000"/><rect x="234" y="737" width="1" height="2" fill="#000"/><rect x="249" y="737" width="1" height="2" fill="#000"/><rect x="263" y="737" width="1" height="2" fill="#000"/><rect x="277" y="737" width="1" height="2" fill="#000"/><rect x="291" y="737" width="1" height="5" fill="#000"/><rect x="306" y="737" width="1" height="2" fill="#000"/><rect x="320" y="737" width="1" height="2" fill="#000"/><rect x="334" y="737" width="1" height="2" fill="#000"/><rect x="348" y="737" width="1" height="2" fill="#000"/><rect x="363" y="737" width="1" height="5" fill="#000"/><rect x="377" y="737" width="1" height="2" fill="#000"/><rect x="391" y="737" width="1" height="2" fill="#000"/><rect x="406" y="737" width="1" height="2" fill="#000"/><rect x="420" y="737" width="1" height="2" fill="#000"/><rect x="434" y="737" width="1" height="5" fill="#000"/><rect x="448" y="737" width="1" height="2" fill="#000"/><rect x="463" y="737" width="1" height="2" fill="#000"/><rect x="477" y="737" width="1" height="2" fill="#000"/><rect x="491" y="737" width="1" height="2" fill="#000"/><rect x="505" y="737" width="1" height="5" fill="#000"/><rect x="520" y="737" width="1" height="2" fill="#000"/><rect x="534" y="737" width="1" height="2" fill="#000"/><rect x="548" y="737" width="1" height="2" fill="#000"/><rect x="562" y="737" width="1" height="2" fill="#000"/><rect x="577" y="737" width="1" height="5" fill="#000"/><rect x="591" y="737" width="1" height="2" fill="#000"/><rect x="605" y="737" width="1" height="2" fill="#000"/><rect x="620" y="737" width="1" height="2" fill="#000"/><rect x="634" y="737" width="1" height="2" fill="#000"/><rect x="648" y="737" width="1" height="5" fill="#000"/><rect x="662" y="737" width="1" height="2" fill="#000"/><rect x="677" y="737" width="1" height="2" fill="#000"/><rect x="691" y="737" width="1" height="2" fill="#000"/><rect x="705" y="737" width="1" height="2" fill="#000"/><rect x="719" y="737" width="1" height="5" fill="#000"/><text class="sans" x="291.5" y="750" text-anchor="middle" font-size="10.5" shape-rendering="auto">1</text><text class="sans" x="363.5" y="750" text-anchor="middle" font-size="10.5" shape-rendering="auto">2</text><text class="sans" x="434.5" y="750" text-anchor="middle" font-size="10.5" shape-rendering="auto">3</text><text class="sans" x="505.5" y="750" text-anchor="middle" font-size="10.5" shape-rendering="auto">4</text><text class="sans" x="577.5" y="750" text-anchor="middle" font-size="10.5" shape-rendering="auto">5</text><text class="sans" x="648.5" y="750" text-anchor="middle" font-size="10.5" shape-rendering="auto">6</text><text class="sans" x="719.5" y="750" text-anchor="middle" font-size="10.5" shape-rendering="auto">7</text><g shape-rendering="auto"><path d="M203.5,722.5H216.5L218.5,724.5V734.5H203.5L201.5,732.5V724.5Z" fill="#00ff00" stroke="#000" stroke-width="1"/><text class="sans" x="202.6" y="731" font-size="9.5" letter-spacing="1.8" stroke="#000" stroke-width="0.3">24</text><path d="M692.5,722.5H719.5L721.5,724.5V734.5H692.5L690.5,732.5V724.5Z" fill="#00ff00" stroke="#000" stroke-width="1"/><text class="sans" x="692.2" y="731" font-size="9.5" letter-spacing="1.65" stroke="#000" stroke-width="0.3">1124</text><circle cx="220.5" cy="736.5" r="3.3" fill="url(#ball)" stroke="#000" stroke-width="1"/><circle cx="723.5" cy="736.5" r="3.3" fill="url(#ball)" stroke="#000" stroke-width="1"/></g></svg>
<div style="left:737px;top:168px;width:14px;height:14px;background:#e6e6e6;box-shadow:inset -1px -1px 0 #696969, inset 1px 1px 0 #fff, inset -2px -2px 0 #a0a0a0;"></div>
<svg style="left:739.0px;top:172.0px" width="9" height="5" viewBox="0 0 9 5"><polygon points="0,5 4.5,0 9,5" fill="#000"/></svg>
<div style="left:737px;top:183px;width:14px;height:94px;background:#e6e6e6;box-shadow:inset -1px -1px 0 #696969, inset 1px 1px 0 #fff, inset -2px -2px 0 #a0a0a0;"></div>
<div style="left:737px;top:708px;width:14px;height:14px;background:#e6e6e6;box-shadow:inset -1px -1px 0 #696969, inset 1px 1px 0 #fff, inset -2px -2px 0 #a0a0a0;"></div>
<svg style="left:739.0px;top:712.0px" width="9" height="5" viewBox="0 0 9 5"><polygon points="0,0 9,0 4.5,5" fill="#000"/></svg>
<div style="left:742px;top:277px;width:2px;height:431px;background:#8c8c8c;"></div>
<div style="left:744px;top:277px;width:4px;height:431px;background:#d8d8d8;"></div>
<div style="left:748px;top:277px;width:1px;height:431px;background:#a8a8a8;"></div>
<div style="left:198px;top:756px;width:13px;height:12px;background:#cecece;border-style:solid;border-width:1px;border-color:#e8e8e8 #a0a0a0 #a0a0a0 #e8e8e8;"></div>
<svg style="left:203.0px;top:758.0px" width="5" height="9" viewBox="0 0 5 9"><polygon points="5,0 0,4.5 5,9" fill="#a0a0a8"/></svg>
<div style="left:214px;top:756px;width:499px;height:12px;background:#cecece;border-style:solid;border-width:1px;border-color:#e8e8e8 #a0a0a0 #a0a0a0 #e8e8e8;"></div>
<div style="left:715px;top:759px;width:5px;height:2px;background:#e2e2e2;"></div>
<div style="left:715px;top:761px;width:5px;height:1px;background:#a0a0a0;"></div>
<div style="left:715px;top:764px;width:5px;height:2px;background:#e2e2e2;"></div>
<div style="left:715px;top:767px;width:5px;height:1px;background:#a0a0a0;"></div>
<div style="left:720px;top:756px;width:13px;height:12px;background:#cecece;border-style:solid;border-width:1px;border-color:#e8e8e8 #a0a0a0 #a0a0a0 #e8e8e8;"></div>
<svg style="left:725.0px;top:758.0px" width="5" height="9" viewBox="0 0 5 9"><polygon points="0,0 5,4.5 0,9" fill="#a0a0a8"/></svg>
<div style="left:3px;top:778px;width:234px;height:12px;background:#e6e6e6;border-style:solid;border-width:1px;border-color:#696969 #ffffff #ffffff #696969;"></div>
<div style="left:240px;top:778px;width:236px;height:12px;background:#e6e6e6;border-style:solid;border-width:1px;border-color:#696969 #ffffff #ffffff #696969;"></div>
<div style="left:479px;top:778px;width:235px;height:12px;background:#e6e6e6;border-style:solid;border-width:1px;border-color:#696969 #ffffff #ffffff #696969;"></div>
<div style="left:717px;top:778px;width:237px;height:12px;background:#e6e6e6;border-style:solid;border-width:1px;border-color:#696969 #ffffff #ffffff #696969;"></div>
<div style="left:957px;top:778px;width:13px;height:12px;background:#e6e6e6;border-style:solid;border-width:1px;border-color:#696969 #ffffff #ffffff #696969;"></div>
<div style="left:6.5px;top:777px;white-space:pre;font-size:9.6px;letter-spacing:0.3px;line-height:12px;">Widerlager A2</div>
<div style="left:482.5px;top:777px;white-space:pre;font-size:9.6px;letter-spacing:0.25px;line-height:12px;">Zusammenfassung Nachweis</div>
<svg style="left:960px;top:779px" width="10" height="11" viewBox="0 0 10 11"><circle cx="4.5" cy="6.8" r="2.6" fill="#1030e0"/><circle cx="4.5" cy="3" r="2.6" fill="#e01010"/></svg>
<div style="left:762px;top:97px;width:207px;height:132px;background:#fffbf0;border-style:solid;border-width:1px;border-color:#808080 #ffffff #ffffff #808080;"></div>
<svg style="left:763px;top:98px" width="207" height="132" viewBox="763 98 207 132"><g fill="none" stroke="#ac8250" stroke-width="1.1" stroke-linejoin="round"><path d="M819.5,116.5V125.5L822.5,126.5L829.5,134.5"/><path d="M819.5,116.5L829.5,119.5L855.5,129.5L859.5,130.5L893.5,128L906.5,123.5"/><path d="M829.5,119.5V170"/><path d="M836.5,170V139.5L844.5,137.5H846.5V170"/><path d="M854.5,129.5V146.5L859,158.5"/><path d="M859.5,130.5V184"/><path d="M894.5,119.5L905.5,122.5L906.5,125V136.5"/><path d="M894.5,119.5V149.5L902.5,152.5L910.5,151.5"/><path d="M854.5,146L883.5,140.5L904.5,136.5"/><path d="M855,147.5L884.5,142L907.5,138L911.5,138.5V150"/><path d="M859.5,160L883.5,156.5L889.5,155L910.5,151.5"/><path d="M883.5,140.5V186"/><path d="M889.5,142V186"/><path d="M904.5,135.5V182"/><path d="M911.5,138.5V172"/><path d="M884.5,141L888.5,154.5"/><path d="M908.5,138L910.5,149.5"/><path d="M822.5,170.5L859.5,180.5L919,172.5L903.5,167"/><path d="M822.5,170.5L847,168.5"/><path d="M826,171.5L859.5,182.5L919,174"/><path d="M829,170L861,179"/><path d="M833,169.5L864,178.5"/><path d="M859.5,181.5L917,173.5"/><path d="M861,180L915,172"/><path d="M856.5,182V194.5L918.5,182.5V172.5"/><path d="M861.5,183V192"/><path d="M834.5,181V207"/><path d="M844,181L847.5,207"/><path d="M851.5,182V215"/><path d="M860.5,183V219"/><path d="M868.5,183V216"/><path d="M882.5,172V208"/><path d="M884,190L884.5,215"/><path d="M890.5,176V212"/><path d="M896.5,176V207"/><path d="M905.5,176V210"/><path d="M829.5,170V182"/></g><g fill="none" stroke="#6e4e22" stroke-width="1"><path d="M851.5,205V215"/><path d="M860.5,203V219"/><path d="M859.5,209V214"/><path d="M868.5,205V216"/><path d="M882.5,172V185"/><path d="M882.5,200V208"/><path d="M884.5,203V215"/><path d="M890.5,202V212"/><path d="M896.5,196V207"/><path d="M905.5,198V210"/><path d="M846.5,197L847.5,207"/><path d="M834.5,207L836.5,212"/></g><line x1="861" y1="181.3" x2="917" y2="173.6" stroke="#b08858" stroke-width="3"/><line x1="864" y1="181" x2="915" y2="174" stroke="#f4e8d4" stroke-width="1" stroke-dasharray="1.5 5"/><line x1="840.8" y1="180" x2="838.3" y2="195.5" stroke="#f0e000" stroke-width="1.2"/><rect x="835.5" y="168" width="10" height="12.5" rx="3" ry="3" fill="#66dc00" stroke="#000" stroke-width="1.2"/><text class="sans" x="840.5" y="178" text-anchor="middle" font-size="10.5">A</text><rect x="832.5" y="195" width="10" height="12.5" rx="3" ry="3" fill="#66dc00" stroke="#000" stroke-width="1.2"/><text class="sans" x="837.5" y="205" text-anchor="middle" font-size="10.5">E</text></svg>
<div style="left:763px;top:239px;width:206px;height:476px;border:1px solid #fff;"></div>
<div style="left:762px;top:238px;width:206px;height:476px;background:#cecece;border:1px solid #696969;"></div>
<div style="left:763px;top:239px;width:1px;height:476px;background:#fff;"></div>
<div style="left:763px;top:239px;width:206px;height:1px;background:#fff;"></div>
<div style="left:765px;top:242px;width:187px;height:455px;background:#fffbf0;box-shadow:inset 1px 1px 0 #a0a0a0, inset -1px -1px 0 #fff, inset 2px 2px 0 #696969, inset -2px -2px 0 #e3e3e3;"></div>
<svg style="left:767px;top:244px" width="183" height="451" viewBox="767 244 183 451"><rect x="769" y="660" width="179" height="23" fill="#a0e080"/><g stroke="#f0a860" stroke-width="1" shape-rendering="crispEdges" fill="none"><path d="M787.5,264V700M791,281.5H812M820.5,287V700"/><path d="M821,304.5H843"/><path d="M821,327.5H843"/><path d="M821,350.5H843"/><path d="M821,373.5H843"/><path d="M821,396.5H843"/><path d="M821,419.5H843"/><path d="M821,442.5H843"/><path d="M821,465.5H843"/><path d="M821,488.5H843"/><path d="M821,511.5H843"/><path d="M821,534.5H843"/><path d="M821,557.5H843"/><path d="M821,580.5H843"/><path d="M821,603.5H843"/><path d="M821,626.5H843"/><path d="M821,649.5H843"/><path d="M821,672.5H843"/><path d="M821,695.5H843"/></g><g transform="translate(779,251.5)"><path d="M1.5,11.5V3.5L3.5,1.5H7.5L9.5,3.5H13.5V5.5" fill="#d8d8d8" stroke="#000" stroke-width="1"/><path d="M2,3.5H13V5.5H4L2,10Z" fill="#b0b0b0"/><path d="M1.5,11.5L4.5,5.5H15.5L12.5,11.5Z" fill="#e8e040" stroke="#000" stroke-width="1"/></g><g transform="translate(812,274.5)"><path d="M1.5,11.5V3.5L3.5,1.5H7.5L9.5,3.5H13.5V5.5" fill="#d8d8d8" stroke="#000" stroke-width="1"/><path d="M2,3.5H13V5.5H4L2,10Z" fill="#b0b0b0"/><path d="M1.5,11.5L4.5,5.5H15.5L12.5,11.5Z" fill="#e8e040" stroke="#000" stroke-width="1"/></g><rect x="781.5" y="275.5" width="9" height="9" fill="#f0f0f0" stroke="#000" stroke-width="1" shape-rendering="crispEdges"/><rect x="783" y="279" width="6" height="2" fill="#000" shape-rendering="crispEdges"/><text class="sans" x="803" y="260.6" font-size="12" letter-spacing="0" fill="#ac8256">Linien</text><text class="sans" x="836.5" y="283.6" font-size="12" letter-spacing="0.1" fill="#ac8256">Stäbe</text><defs><g id="ring"><circle cx="7.8" cy="7.8" r="6.0" fill="none" stroke="#8e8e7a" stroke-width="3.6"/><path d="M13.8,2.8A7.7,7.7 0 0 1 2.6,13.6" fill="none" stroke="#1c1c14" stroke-width="1.2" transform="translate(0.2,0.2)"/><path d="M4.6,11A4.3,4.3 0 0 1 10.8,4.6" fill="none" stroke="#1c1c14" stroke-width="1.1"/><path d="M2.2,12.6A7.4,7.4 0 0 1 12.8,2.4" fill="none" stroke="#b4b4a4" stroke-width="0.9"/><rect x="6" y="7.2" width="2.4" height="1" fill="#f0a860"/></g></defs><use href="#ring" x="845" y="296.7"/><text class="sans" x="869" y="307" font-size="12.5" dx="0 -1.5 -1.5">117</text><use href="#ring" x="845" y="319.7"/><text class="sans" x="869" y="330" font-size="12.5" dx="0 -1.5 -1.5">118</text><use href="#ring" x="845" y="342.7"/><text class="sans" x="869" y="353" font-size="12.5" dx="0 -1.5 -1.5">119</text><use href="#ring" x="845" y="365.7"/><text class="sans" x="869" y="376" font-size="12.5" dx="0 -1.5 0">120</text><use href="#ring" x="845" y="388.7"/><text class="sans" x="869" y="399" font-size="12.5" dx="0 -1.5 0">121</text><use href="#ring" x="845" y="411.7"/><text class="sans" x="869" y="422" font-size="12.5" dx="0 -1.5 0">122</text><use href="#ring" x="845" y="434.7"/><text class="sans" x="869" y="445" font-size="12.5" dx="0 -1.5 0">123</text><use href="#ring" x="845" y="457.7"/><text class="sans" x="869" y="468" font-size="12.5" dx="0 -1.5 0">124</text><use href="#ring" x="845" y="480.7"/><text class="sans" x="869" y="491" font-size="12.5" dx="0 -1.5 0">125</text><use href="#ring" x="845" y="503.7"/><text class="sans" x="869" y="514" font-size="12.5" dx="0 -1.5 0">126</text><use href="#ring" x="845" y="526.7"/><text class="sans" x="869" y="537" font-size="12.5" dx="0 -1.5 0">127</text><use href="#ring" x="845" y="549.7"/><text class="sans" x="869" y="560" font-size="12.5" dx="0 -1.5 0">128</text><use href="#ring" x="845" y="572.7"/><text class="sans" x="869" y="583" font-size="12.5" dx="0 -1.5 0">129</text><use href="#ring" x="845" y="595.7"/><text class="sans" x="869" y="606" font-size="12.5" dx="0 -1.5 0">130</text><use href="#ring" x="845" y="618.7"/><text class="sans" x="869" y="629" font-size="12.5" dx="0 -1.5 0">131</text><use href="#ring" x="845" y="641.7"/><text class="sans" x="869" y="652" font-size="12.5" dx="0 -1.5 0">132</text><use href="#ring" x="845" y="664.7"/><text class="sans" x="869" y="675" font-size="12.5" dx="0 -1.5 0">133</text><use href="#ring" x="845" y="687.7"/><text class="sans" x="869" y="698" font-size="12.5" dx="0 -1.5 0">134</text></svg>
<div style="left:953px;top:243px;width:14px;height:14px;background:#e6e6e6;box-shadow:inset -1px -1px 0 #696969, inset 1px 1px 0 #fff, inset -2px -2px 0 #a0a0a0;"></div>
<svg style="left:955.0px;top:247.0px" width="9" height="5" viewBox="0 0 9 5"><polygon points="0,5 4.5,0 9,5" fill="#000"/></svg>
<div style="left:953px;top:682px;width:14px;height:14px;background:#e6e6e6;box-shadow:inset -1px -1px 0 #696969, inset 1px 1px 0 #fff, inset -2px -2px 0 #a0a0a0;"></div>
<svg style="left:955.0px;top:686.0px" width="9" height="5" viewBox="0 0 9 5"><polygon points="0,0 9,0 4.5,5" fill="#000"/></svg>
<div style="left:953px;top:258px;width:14px;height:192px;background:#e6e6e6;box-shadow:inset -1px -1px 0 #696969, inset 1px 1px 0 #fff, inset -2px -2px 0 #a0a0a0;"></div>
<div style="left:958px;top:450px;width:2px;height:232px;background:#8c8c8c;"></div>
<div style="left:960px;top:450px;width:3px;height:232px;background:#dadada;"></div>
<div style="left:963px;top:450px;width:1px;height:232px;background:#b0b0b0;"></div>
<div style="left:767px;top:699px;width:14px;height:14px;background:#e6e6e6;box-shadow:inset -1px -1px 0 #696969, inset 1px 1px 0 #fff, inset -2px -2px 0 #a0a0a0;"></div>
<svg style="left:771.0px;top:701.0px" width="5" height="9" viewBox="0 0 5 9"><polygon points="5,0 0,4.5 5,9" fill="#000"/></svg>
<div style="left:781px;top:699px;width:88px;height:14px;background:#e6e6e6;box-shadow:inset -1px -1px 0 #696969, inset 1px 1px 0 #fff, inset -2px -2px 0 #a0a0a0;"></div>
<div style="left:937px;top:699px;width:14px;height:14px;background:#e6e6e6;box-shadow:inset -1px -1px 0 #696969, inset 1px 1px 0 #fff, inset -2px -2px 0 #a0a0a0;"></div>
<svg style="left:941.0px;top:701.0px" width="5" height="9" viewBox="0 0 5 9"><polygon points="0,0 5,4.5 0,9" fill="#000"/></svg>
<div style="left:869px;top:704px;width:68px;height:2px;background:#8c8c8c;"></div>
<div style="left:869px;top:706px;width:68px;height:3px;background:#d8d8d8;"></div>
<div style="left:869px;top:709px;width:68px;height:1px;background:#a8a8a8;"></div>
<div style="left:762px;top:722px;width:194px;height:20px;background:#ffffe1;box-shadow:inset 1px 1px 0 #a0a0a0, inset -1px -1px 0 #fff, inset 2px 2px 0 #696969, inset -2px -2px 0 #e3e3e3;"></div>
<div style="left:938px;top:725px;width:14px;height:14px;background:#e6e6e6;box-shadow:inset -1px -1px 0 #696969, inset 1px 1px 0 #fff, inset -2px -2px 0 #a0a0a0;"></div>
<svg style="left:940.0px;top:729.0px" width="9" height="5" viewBox="0 0 9 5"><polygon points="0,0 9,0 4.5,5" fill="#000"/></svg>
<div style="left:770.5px;top:723px;white-space:pre;font-size:12px;letter-spacing:0.32px;line-height:16px;">alle Liniengrafiken</div>
<div style="left:956px;top:721px;width:13px;height:10px;background:#e6e6e6;box-shadow:inset -1px -1px 0 #696969, inset 1px 1px 0 #fff, inset -2px -2px 0 #a0a0a0;"></div>
<svg style="left:958.0px;top:723.0px" width="9" height="5" viewBox="0 0 9 5"><polygon points="0,5 4.5,0 9,5" fill="#000"/></svg>
<div style="left:956px;top:732px;width:13px;height:10px;background:#e6e6e6;box-shadow:inset -1px -1px 0 #696969, inset 1px 1px 0 #fff, inset -2px -2px 0 #a0a0a0;"></div>
<svg style="left:958.0px;top:734.0px" width="9" height="5" viewBox="0 0 9 5"><polygon points="0,0 9,0 4.5,5" fill="#000"/></svg>
<div class="mono" style="left:769px;top:754px;white-space:pre;font-size:11.67px;letter-spacing:-1px;line-height:14px;">Bilder pro Seite</div>
<div style="left:875px;top:751px;width:40px;height:20px;background:#ffffe1;box-shadow:inset 1px 1px 0 #a0a0a0, inset -1px -1px 0 #fff, inset 2px 2px 0 #696969, inset -2px -2px 0 #e3e3e3;"></div>
<div style="left:898px;top:754px;width:14px;height:14px;background:#e6e6e6;box-shadow:inset -1px -1px 0 #696969, inset 1px 1px 0 #fff, inset -2px -2px 0 #a0a0a0;"></div>
<svg style="left:900.0px;top:758.0px" width="9" height="5" viewBox="0 0 9 5"><polygon points="0,0 9,0 4.5,5" fill="#000"/></svg>
<div style="left:882px;top:753px;white-space:pre;font-size:12.5px;line-height:16px;">5</div>
<svg style="left:3px;top:57px" width="34" height="34" viewBox="0 0 34 34"><path d="M4,6.8C9,3.2 16,3.6 21,6.6C25,9 28,11.6 29.8,14.2C26,12.4 22,9.2 17,7.4C12,5.8 8,6.2 4,6.8Z" fill="#7a3800" stroke="#7a3800" stroke-width="0.9" stroke-linejoin="round"/>
<path d="M2,18.5C3,14.5 6,11.5 9,11.2C13,10.8 16,11.6 19,13.4C14,13 10,13.4 7.5,15C5.5,16.2 4,18 2,18.5Z" fill="#5c9c9c"/>
<path d="M5,17.5C8,15 12,14.4 16,15.4C21,16.8 25,19.4 27,22.4L26.8,26.4C24,27 17,25.4 12,23.2C9,21.8 6.5,19.6 5,17.5Z" fill="#fff"/>
<circle cx="14.6" cy="20.6" r="3.9" fill="#3c8c00"/><circle cx="14.6" cy="20.6" r="2" fill="#5c6c10"/><rect x="14" y="20" width="1" height="1" fill="#fff"/>
<path d="M5,17.3C8,15 12,14.4 16,15.4C21,16.8 25,19.4 27,22.4" fill="none" stroke="#000" stroke-width="2"/>
<path d="M5.5,18.5C7.5,21.4 11,23.4 15,24.6C19,25.8 23,26.8 26.6,26.6" fill="none" stroke="#000" stroke-width="1.4"/>
<path d="M9,14.6C13,13.6 18,14.6 22,17.2C24.5,18.8 26,21 26.8,23.4" fill="none" stroke="#000" stroke-width="1"/></svg>
<svg style="left:40px;top:57px" width="34" height="34" viewBox="0 0 34 34"><path d="M9.8,14.6L12.6,6.5H24.4L21,14.6Z" fill="#fff" stroke="#000" stroke-width="1"/>
<path d="M13.5,8.5H15M16,8.5H18.5M19.5,8.5H22M12.8,10.5H15.5M16.5,10.5H18M19,10.5H21M12,12.5H14.5M15.5,12.5H18M19,12.5H20.4" stroke="#000" stroke-width="1" fill="none"/>
<g transform="translate(4.5,14)"><path d="M1.5,1.5H21L22,3V6.5H0.5V3Z" fill="#a0bce0" stroke="#000" stroke-width="1.2"/><path d="M2,2.2H20.5V3.4H1.4Z" fill="#e0ecfc"/><path d="M2.2,7H20.6L19.4,11H3.4Z" fill="#88a8d0" stroke="#000" stroke-width="1.2"/><rect x="14" y="4.2" width="3.2" height="1" fill="#000"/></g></svg>
<svg style="left:77px;top:57px" width="34" height="34" viewBox="0 0 34 34"><g fill="#fffbf0" stroke="#a0a0a0" stroke-width="1"><rect x="3.5" y="2.5" width="21" height="25"/><rect x="5.5" y="4.5" width="21" height="25"/><rect x="7.5" y="6.5" width="21" height="24.5"/></g><path d="M13.5,17.5V12.5H23V17.5" fill="#fff" stroke="#b0c0d4" stroke-width="1"/><g transform="translate(9,16.5)"><path d="M2,1H14.5L16.5,2.8V5.5H0.5V2.8Z" fill="#b4c8e0" stroke="#30405c" stroke-width="1"/><path d="M2.4,1.6H14.2L15.2,2.6H1.4Z" fill="#e8f0fc"/><path d="M1.8,6H15.2L13.8,10H3.2Z" fill="#90acd0" stroke="#30405c" stroke-width="1"/><rect x="9.5" y="3.4" width="3" height="1" fill="#000"/></g><line x1="7.6" y1="14" x2="2.6" y2="19.2" stroke="#2c8c2c" stroke-width="2.8" stroke-linecap="round"/>
<circle cx="12.5" cy="9" r="4.8" fill="#c0dcff"/><circle cx="11.6" cy="8" r="2.4" fill="#dcecff"/>
<circle cx="12.5" cy="9" r="6.1" fill="none" stroke="#2c8c2c" stroke-width="2.6"/><circle cx="12.5" cy="9" r="6.1" fill="none" stroke="#9cd49c" stroke-width="0.7"/>
<rect x="4" y="19.5" width="1.2" height="2" fill="#000"/></svg>
<svg style="left:114px;top:57px" width="34" height="34" viewBox="0 0 34 34"><g fill="#fffbf0" stroke="#a0a0a0" stroke-width="1"><rect x="3.5" y="2.5" width="21" height="25"/><rect x="5.5" y="4.5" width="21" height="25"/><rect x="7.5" y="6.5" width="21" height="24.5"/></g><path d="M13.5,17.5V12.5H23V17.5" fill="#fff" stroke="#b0c0d4" stroke-width="1"/><g transform="translate(9,16.5)"><path d="M2,1H14.5L16.5,2.8V5.5H0.5V2.8Z" fill="#b4c8e0" stroke="#30405c" stroke-width="1"/><path d="M2.4,1.6H14.2L15.2,2.6H1.4Z" fill="#e8f0fc"/><path d="M1.8,6H15.2L13.8,10H3.2Z" fill="#90acd0" stroke="#30405c" stroke-width="1"/><rect x="9.5" y="3.4" width="3" height="1" fill="#000"/></g><path d="M2.6,17.4L13.2,6.6L15.6,9L5,20Z" fill="#e80000"/><path d="M5,20L15.6,9" stroke="#400000" stroke-width="1" fill="none"/>
<path d="M13.2,6.6L17.2,3.6L15.6,9Z" fill="#dca070"/><circle cx="17.4" cy="3.6" r="1" fill="#f00000"/><path d="M13.2,6.6L15.6,9" stroke="#703010" stroke-width="0.8"/></svg>
<svg style="left:151px;top:57px" width="34" height="34" viewBox="0 0 34 34"><path d="M3.5,7V26H14.5L15.6,27.6L16.7,26H28.5V7H17.5L15.6,8.4L13.5,7Z" fill="#fff" stroke="#000" stroke-width="1.2"/>
<path d="M3.5,25.6H28.5" stroke="#000" stroke-width="2.6"/><path d="M28.6,7.5V26" stroke="#000" stroke-width="1.6"/><path d="M5,24.2H14M17,24.2H27" stroke="#909090" stroke-width="0.9"/>
<path d="M15.6,8V27" stroke="#000" stroke-width="1"/>
<g fill="#ffee00"><rect x="5" y="12.4" width="5" height="2.2"/><rect x="21" y="12.4" width="5" height="2.2"/><rect x="6.6" y="18.3" width="5.2" height="2.2"/></g>
<g fill="#f02000"><rect x="6" y="13" width="3" height="1"/><rect x="22" y="13" width="3" height="1"/><rect x="7.8" y="18.9" width="3" height="1"/></g>
<g stroke="#000" stroke-width="1" fill="none"><path d="M6,9.5H8M9,9.5H10M11,9.5H13M18,9.5H20M21,9.5H23M24,9.5H25.6M7,11.5H10M11.5,11.5H13M18.5,11.5H20M21,11.5H22.5M23.5,11.5H25.6M11,13.5H12.4M18,13.5H20.4M6,15.5H8.4M9.6,15.5H10.6M11.6,15.5H13M18,15.5H19.6M20.8,15.5H22.2M23,15.5H25.6M6,17.5H8M9.4,17.5H12.6M18,17.5H19.4M20.4,17.5H23M24,17.5H25.6M12.4,19.5H13M18,19.5H20M21,19.5H22M23,19.5H25M6,21.5H8M9,21.5H10.4M11.4,21.5H13M18,21.5H20.6M21.8,21.5H25"/></g></svg>
<svg style="left:188px;top:57px" width="34" height="34" viewBox="0 0 34 34"><rect x="3.6" y="6.7" width="12.4" height="19.6" fill="#a4a06c" stroke="#000" stroke-width="1"/><rect x="5.9" y="8.8" width="8" height="17.4" fill="#fff" stroke="#000" stroke-width="1"/>
<rect x="10.9" y="17" width="2" height="1" fill="#000"/><path d="M1.2,26.6H29.8" stroke="#000" stroke-width="1.2"/>
<g fill="#3434d0"><circle cx="23.8" cy="10.8" r="1.5"/><path d="M22.4,12.4L25,12.6L25.6,20L29,25.2L27,25.6L23.6,21.4L21.4,25.6L18.8,25.6L21.4,20.4L21.6,16.6L17,17.8L16.8,16.8L21.8,14.8Z"/></g></svg>
</body></html>
